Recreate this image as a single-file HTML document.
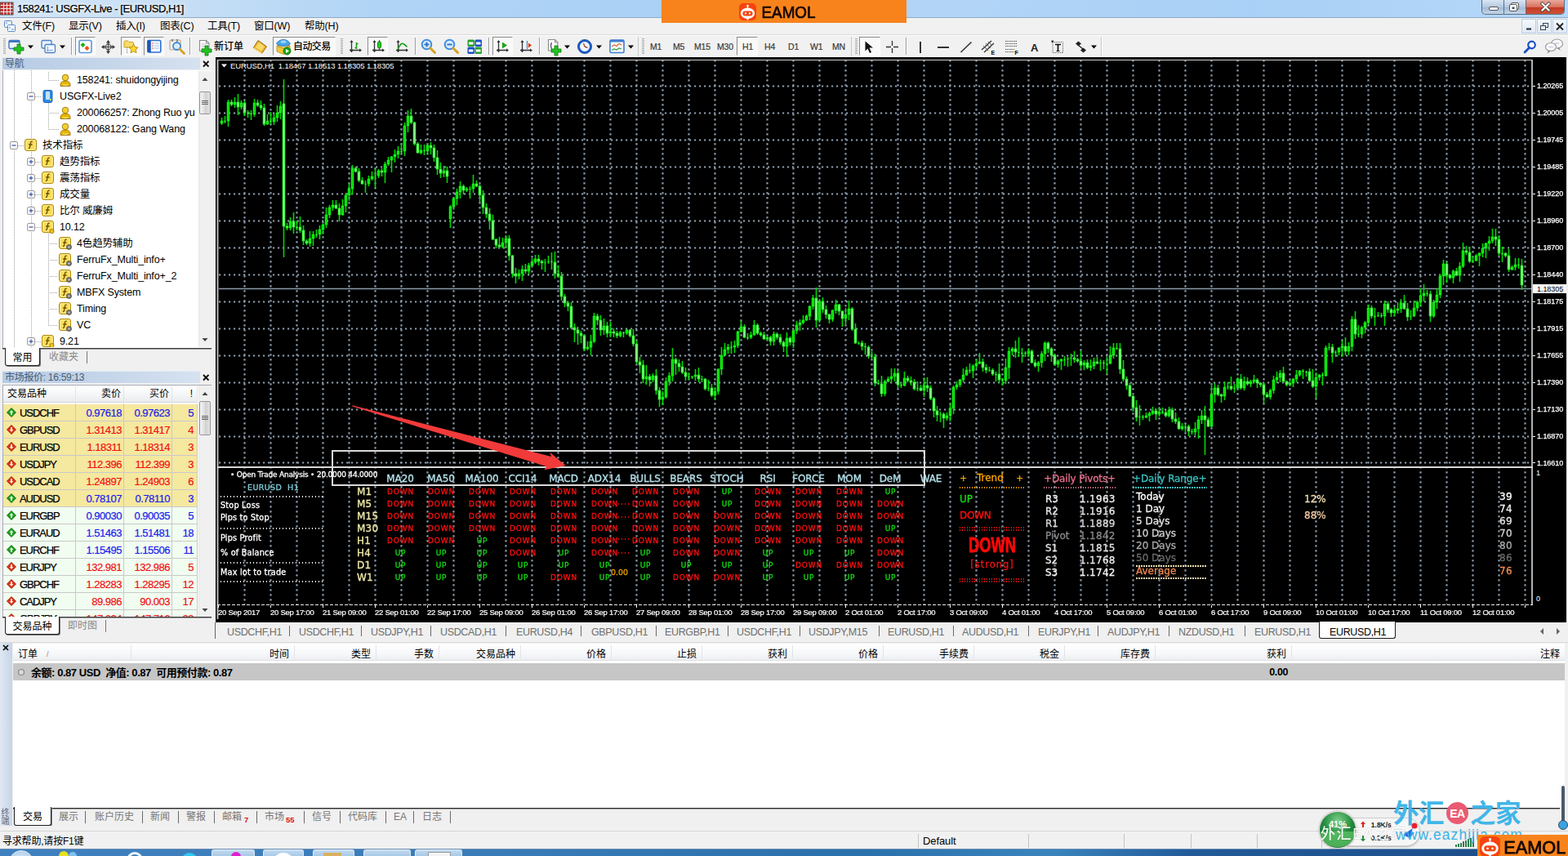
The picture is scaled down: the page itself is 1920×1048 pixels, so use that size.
<!DOCTYPE html>
<html lang="zh-CN"><head><meta charset="utf-8"><title>158241: USGFX-Live - [EURUSD,H1]</title>
<style>
*{box-sizing:border-box;margin:0;padding:0}
html,body{width:1920px;height:1048px;overflow:hidden;background:#f0f0f0}
body{position:relative;font-family:"Liberation Sans","Noto Sans CJK SC",sans-serif;font-size:12px;color:#000}
.a{position:absolute}
.t{position:absolute;white-space:nowrap;line-height:1}
.cj{font-family:"Liberation Sans","Noto Sans CJK SC",sans-serif}
.dv{font-family:"DejaVu Sans","Liberation Sans",sans-serif}
svg{position:absolute;overflow:visible}
</style></head>
<body>

<!-- parts.p10_frame -->
<div class="a" style="left:0px;top:0px;width:1920px;height:22px;background:linear-gradient(90deg,#d3e5f6 0%,#c6def5 12%,#b0d4f6 24%,#aad1f6 45%,#b2d5f7 60%,#a9d0f6 80%,#b6d8f8 100%);"></div>
<div class="a" style="left:0px;top:21px;width:1920px;height:1px;background:#8fa9c6;"></div>
<svg style="left:0;top:2px" width="17" height="17" viewBox="0 0 17 17"><rect x="0" y="1" width="16" height="15" fill="#c33"/><g stroke="#e8e8e8" stroke-width="1"><path d="M0 4.5H16M0 8.5H16M0 12.5H16M4.5 1V16M8.5 1V16M12.5 1V16"/></g><rect x="0" y="1" width="16" height="15" fill="none" stroke="#555" stroke-width="1"/></svg>
<div class="t " style="left:21px;top:4.0px;font-size:13px;color:#000;letter-spacing:-0.42px;-webkit-text-stroke:0.25px #000;text-shadow:0 0 6px #fff,0 0 3px #fff">158241: USGFX-Live - [EURUSD,H1]</div>
<div class="a" style="left:810px;top:0px;width:300px;height:28px;background:#f8831c;z-index:5"></div>
<svg style="left:905px;top:4px;z-index:6" width="100" height="22" viewBox="0 0 100 22"><rect x="0" y="0" width="21" height="21" rx="5" fill="#f5440f"/><path d="M10.500 6.200V3.200" stroke="#fff" stroke-width="1.300"/><circle cx="10.500" cy="2.900" r="1.250" fill="#fff"/><ellipse cx="10.500" cy="12.300" rx="8.600" ry="6.800" fill="#fff"/><path d="M8.500 18.500h4l-2 2.200z" fill="#fff"/><rect x="4.400" y="9.400" width="12.200" height="6" rx="3" fill="#f5440f"/><circle cx="8" cy="12.400" r="1.150" fill="#fff"/><circle cx="13" cy="12.400" r="1.150" fill="#fff"/><text x="27.500" y="18.300" font-family="Liberation Sans,sans-serif" font-size="19.500" fill="#160800" stroke="#160800" stroke-width="0.700" textLength="66" lengthAdjust="spacingAndGlyphs" style="filter:blur(0.3px)">EAMOL</text></svg>
<div class="a" style="left:1814px;top:0;width:102px;height:18px;border:1px solid #5b6f86;border-top:none;border-radius:0 0 5px 5px;background:linear-gradient(#d8e6f5,#b4c9e0 50%,#9fb8d4 51%,#c3d6ea);overflow:hidden"><div class="a" style="left:54px;top:0;width:48px;height:18px;background:linear-gradient(#eaa99b,#d9705c 48%,#c23a22 52%,#d2543a)"></div><div class="a" style="left:26px;top:0;width:1px;height:18px;background:#5b6f86"></div><div class="a" style="left:53px;top:0;width:1px;height:18px;background:#5b6f86"></div></div>
<svg style="left:1814px;top:0" width="102" height="18"><rect x="9.5" y="8.5" width="11" height="4" rx="1.5" fill="#fff" stroke="#555" stroke-width="1"/><rect x="36.500" y="3.500" width="9" height="8" rx="1.5" fill="#fff" stroke="#555"/><rect x="34.500" y="5.500" width="9" height="8" rx="1.5" fill="#fff" stroke="#555"/><rect x="37.500" y="8.500" width="3" height="2.500" fill="#456"/><path d="M74.500 4.500L82.500 12.500M82.500 4.500L74.500 12.500" stroke="#444" stroke-width="3.800" stroke-linecap="square"/><path d="M74.500 4.500L82.500 12.500M82.500 4.500L74.500 12.500" stroke="#fff" stroke-width="2.200" stroke-linecap="square"/></svg>
<div class="a" style="left:0px;top:22px;width:1920px;height:21px;background:#f1f1f1;"></div>
<div class="a" style="left:0px;top:42px;width:1920px;height:1px;background:#d9d9d9;"></div>
<div class="a" style="left:0px;top:43px;width:1920px;height:1px;background:#ffffff;"></div>
<svg style="left:4px;top:24px" width="16" height="16" viewBox="0 0 16 16"><rect x="1.5" y="1.5" width="9" height="8" rx="1" fill="#eaf2fb" stroke="#5b8bc7"/><rect x="5.5" y="6.5" width="9" height="8" rx="1" fill="#f6faff" stroke="#5b8bc7"/><path d="M7 10h2M10 12h3M3 4h2" stroke="#5b8bc7"/></svg>
<div class="t " style="left:27px;top:25.8px;font-size:12.5px;color:#000;letter-spacing:-0.2px">文件(F)</div>
<div class="t " style="left:84px;top:25.8px;font-size:12.5px;color:#000;letter-spacing:-0.2px">显示(V)</div>
<div class="t " style="left:142px;top:25.8px;font-size:12.5px;color:#000;letter-spacing:-0.2px">插入(I)</div>
<div class="t " style="left:196px;top:25.8px;font-size:12.5px;color:#000;letter-spacing:-0.2px">图表(C)</div>
<div class="t " style="left:254px;top:25.8px;font-size:12.5px;color:#000;letter-spacing:-0.2px">工具(T)</div>
<div class="t " style="left:311px;top:25.8px;font-size:12.5px;color:#000;letter-spacing:-0.2px">窗口(W)</div>
<div class="t " style="left:373px;top:25.8px;font-size:12.5px;color:#000;letter-spacing:-0.2px">帮助(H)</div>
<div class="a" style="left:1863px;top:23px;width:18px;height:18px;border:1px solid #b9cde4;background:linear-gradient(#f4f8fd,#dfe9f5)"></div>
<div class="a" style="left:1882px;top:23px;width:18px;height:18px;border:1px solid #b9cde4;background:linear-gradient(#f4f8fd,#dfe9f5)"></div>
<div class="a" style="left:1901px;top:23px;width:18px;height:18px;border:1px solid #b9cde4;background:linear-gradient(#f4f8fd,#dfe9f5)"></div>
<svg style="left:1863px;top:23px" width="56" height="18"><path d="M6 12.500h6" stroke="#223" stroke-width="2"/><rect x="26.500" y="5.500" width="6" height="5" fill="none" stroke="#345"/><rect x="23.500" y="8.500" width="6" height="5" fill="#e8eef6" stroke="#345"/><path d="M43 5.500L51 13.500M51 5.500L43 13.500" stroke="#222" stroke-width="1.800"/></svg>
<div class="a" style="left:0px;top:44px;width:1920px;height:26px;background:#f1f1f1;"></div>
<!-- parts.p15_toolbar -->
<div class="a" style="left:4px;top:47px;width:3px;height:20px;background:repeating-linear-gradient(180deg,#a8a8a8 0 1px,transparent 1px 2px)"></div>
<svg style="left:10px;top:48px" width="19" height="19" viewBox="0 0 19 19"><rect x="1" y="1.500" width="13" height="10" rx="1.500" fill="#eef5fd" stroke="#3d78c4" stroke-width="1.400"/><rect x="1" y="1.500" width="13" height="2.500" fill="#3d78c4"/><path d="M7 10h4v-4h4v4h4v4h-4v4h-4v-4h-4z" fill="#22c322" stroke="#0a7a0a" stroke-width="0.800"/></svg>
<svg style="left:34px;top:55px" width="7" height="5" viewBox="0 0 7 5"><path d="M0 0.500h7L3.500 4.500z" fill="#000"/></svg>
<svg style="left:50px;top:48px" width="19" height="19" viewBox="0 0 19 19"><rect x="1" y="1.500" width="12" height="9.500" rx="1.500" fill="#e8f1fb" stroke="#4b82c8" stroke-width="1.300"/><rect x="5" y="6.500" width="12.500" height="10" rx="1.500" fill="#f2f7fd" stroke="#4b82c8" stroke-width="1.300"/><path d="M7 13.500h8M8.500 9v6" stroke="#7fa6d8" stroke-width="1"/></svg>
<svg style="left:73px;top:55px" width="7" height="5" viewBox="0 0 7 5"><path d="M0 0.500h7L3.500 4.500z" fill="#000"/></svg>
<div class="a" style="left:87px;top:46px;width:1px;height:21px;background:#9d9d9d;"></div><div class="a" style="left:88px;top:46px;width:1px;height:21px;background:#fff;"></div>
<div class="a" style="left:92px;top:45px;width:25px;height:23px;background:#f9f9f9;border-top:1px solid #8c8c8c;border-left:1px solid #8c8c8c;border-right:1px solid #fdfdfd;border-bottom:1px solid #fdfdfd"></div>
<svg style="left:96px;top:48px" width="18" height="18" viewBox="0 0 18 18"><rect x="1" y="1.500" width="15" height="15" rx="2" fill="#fff" stroke="#5a96dc" stroke-width="1.600"/><path d="M5.500 4l3 3-3 3-3-3z" fill="#22b022"/><path d="M10.500 8l3 3-3 3-3-3z" fill="#f05020"/></svg>
<svg style="left:124px;top:49px" width="17" height="17" viewBox="0 0 17 17"><path d="M8.500 1v15M1 8.500h15" stroke="#444" stroke-width="1"/><path d="M8.500 0l-2.500 3.500h5zM8.500 17l-2.500-3.500h5zM0 8.500l3.500-2.500v5zM17 8.500l-3.500-2.500v5z" fill="#333"/><path d="M8.500 4l4.500 4.500-4.500 4.500-4.500-4.500z" fill="none" stroke="#555" stroke-width="1.200"/></svg>
<div class="a" style="left:148px;top:45px;width:25px;height:23px;background:#f9f9f9;border-top:1px solid #8c8c8c;border-left:1px solid #8c8c8c;border-right:1px solid #fdfdfd;border-bottom:1px solid #fdfdfd"></div>
<svg style="left:151px;top:47px" width="20" height="20" viewBox="0 0 20 20"><path d="M1 4.500q0-1.500 1.500-1.500h3l1.500 1.500h4q1.500 0 1.500 1.500v5h-11.500z" fill="#f7dd6a" stroke="#c49a1a" stroke-width="0.900"/><path d="M4.500 11v7" stroke="#777" stroke-dasharray="1 1"/><path d="M12.500 7l1.700 3.600 3.900.5-2.900 2.700.8 3.900-3.500-1.900-3.500 1.900.8-3.900-2.900-2.700 3.900-.5z" fill="#ffd92e" stroke="#b8860b" stroke-width="0.900"/></svg>
<div class="a" style="left:176px;top:45px;width:25px;height:23px;background:#f9f9f9;border-top:1px solid #8c8c8c;border-left:1px solid #8c8c8c;border-right:1px solid #fdfdfd;border-bottom:1px solid #fdfdfd"></div>
<svg style="left:180px;top:48px" width="18" height="18" viewBox="0 0 18 18"><rect x="0.800" y="1.500" width="16" height="14.500" rx="1.500" fill="#f8fbff" stroke="#2d6fd0" stroke-width="1.600"/><rect x="0.800" y="1.500" width="4" height="14.500" fill="#1f56b8"/><path d="M6 5h2M6 8h2M6 11h2" stroke="#e05050" stroke-width="1.200"/><path d="M9 5h6M9 8h6M9 11h6" stroke="#a8c0e8" stroke-width="1.200"/></svg>
<svg style="left:207px;top:47px" width="21" height="21" viewBox="0 0 21 21"><rect x="1" y="2" width="13" height="12" rx="1.500" fill="#f4f0ea" stroke="#b8a890" stroke-width="1.200"/><path d="M4 1v3M10 1v3" stroke="#556" stroke-width="1.200"/><circle cx="9.500" cy="9.500" r="4.500" fill="#d8ecff" stroke="#3d88d8" stroke-width="1.800"/><path d="M13 13l5.500 5.500" stroke="#d8a020" stroke-width="2.800" stroke-linecap="round"/></svg>
<div class="a" style="left:232px;top:46px;width:1px;height:21px;background:#9d9d9d;"></div><div class="a" style="left:233px;top:46px;width:1px;height:21px;background:#fff;"></div>
<svg style="left:243px;top:48px" width="18" height="20" viewBox="0 0 18 20"><path d="M1.500 1.500h8l3.500 3.500v9.500h-11.500z" fill="#fbfbfb" stroke="#8c8c8c" stroke-width="1.100"/><path d="M9.500 1.500v3.500h3.500" fill="none" stroke="#8c8c8c"/><path d="M3.500 6h6M3.500 8.500h6M3.500 11h4" stroke="#bbb"/><path d="M4 12h4v-4h4v4h4v4h-4v4h-4v-4h-4z" fill="#22c322" stroke="#0a7a0a" stroke-width="0.800"/></svg>
<div class="t " style="left:262px;top:50.5px;font-size:12px;color:#000;font-weight:500">新订单</div>
<svg style="left:309px;top:48px" width="19" height="19" viewBox="0 0 19 19"><path d="M7 1.500l10.500 7.500-6 8.500-10.500-6.500z" fill="#e8b030" stroke="#9a6a08" stroke-width="1"/><path d="M8 4l7 5-4 5.500-7.500-4.500z" fill="#f8d868"/><path d="M1 11l10.500 6.500" stroke="#fff2b0" stroke-width="1.200"/></svg>
<div class="a" style="left:334px;top:45px;width:77px;height:23px;background:#f9f9f9;border-top:1px solid #8c8c8c;border-left:1px solid #8c8c8c;border-right:1px solid #fdfdfd;border-bottom:1px solid #fdfdfd"></div>
<svg style="left:337px;top:47px" width="20" height="21" viewBox="0 0 20 21"><path d="M2 9l8 3 8-3v7l-8 3.500-8-3.500z" fill="#f2c838" stroke="#b08a10" stroke-width="0.800"/><path d="M2 9l8-2.500 8 2.500-8 3z" fill="#ffe68a" stroke="#b08a10" stroke-width="0.800"/><path d="M1.500 6.500q3-5 8.500-5t8.500 5q-2.500 3-8.500 3t-8.500-3z" fill="#4aa8e8" stroke="#1c6cb8" stroke-width="0.800"/><ellipse cx="10" cy="4" rx="3.500" ry="1.800" fill="#9ad2f8"/><circle cx="14.500" cy="15.500" r="4.500" fill="#18a818" stroke="#0a6a0a" stroke-width="0.800"/><path d="M13 13l4 2.500-4 2.500z" fill="#fff"/></svg>
<div class="t " style="left:359px;top:50.5px;font-size:12px;color:#000;font-weight:500;letter-spacing:-0.6px">自动交易</div>
<div class="a" style="left:417px;top:47px;width:3px;height:20px;background:repeating-linear-gradient(180deg,#a8a8a8 0 1px,transparent 1px 2px)"></div>
<svg style="left:427px;top:49px" width="17" height="17" viewBox="0 0 17 17"><path d="M3.500 1v14M1 12.500h14" stroke="#333" stroke-width="1.300" fill="none"/><path d="M3.500 0l-2 3h4zM16 12.500l-3-2v4z" fill="#333"/><circle cx="3.500" cy="12.500" r="1.600" fill="#333"/><path d="M9.500 3v8M9.500 9.500h-2M9.500 4.500h2" stroke="#18a018" stroke-width="1.600" fill="none"/></svg>
<div class="a" style="left:450px;top:45px;width:25px;height:23px;background:#f9f9f9;border-top:1px solid #8c8c8c;border-left:1px solid #8c8c8c;border-right:1px solid #fdfdfd;border-bottom:1px solid #fdfdfd"></div>
<svg style="left:455px;top:49px" width="17" height="17" viewBox="0 0 17 17"><path d="M3.500 1v14M1 12.500h14" stroke="#333" stroke-width="1.300" fill="none"/><path d="M3.500 0l-2 3h4zM16 12.500l-3-2v4z" fill="#333"/><circle cx="3.500" cy="12.500" r="1.600" fill="#333"/><path d="M9.500 0v12" stroke="#0a700a" stroke-width="1"/><rect x="7.500" y="2" width="4" height="8" rx="1.500" fill="#22d022" stroke="#0a700a" stroke-width="0.900"/></svg>
<svg style="left:484px;top:49px" width="17" height="17" viewBox="0 0 17 17"><path d="M3.500 1v14M1 12.500h14" stroke="#333" stroke-width="1.300" fill="none"/><path d="M3.500 0l-2 3h4zM16 12.500l-3-2v4z" fill="#333"/><circle cx="3.500" cy="12.500" r="1.600" fill="#333"/><path d="M3.500 11q3-8 6-6.500t5 4" stroke="#18a018" stroke-width="1.600" fill="none"/></svg>
<div class="a" style="left:508px;top:46px;width:1px;height:21px;background:#9d9d9d;"></div><div class="a" style="left:509px;top:46px;width:1px;height:21px;background:#fff;"></div>
<svg style="left:515px;top:47px" width="20" height="20" viewBox="0 0 20 20"><circle cx="7.500" cy="7.500" r="5.800" fill="#d6ebff" stroke="#3f8ee0" stroke-width="2"/><path d="M4.500 7.500h6" stroke="#2a6cc0" stroke-width="1.800"/><path d="M7.500 4.500v6" stroke="#2a6cc0" stroke-width="1.800"/><path d="M12 12l5.500 5.500" stroke="#d8a21c" stroke-width="3" stroke-linecap="round"/></svg>
<svg style="left:543px;top:47px" width="20" height="20" viewBox="0 0 20 20"><circle cx="7.500" cy="7.500" r="5.800" fill="#d6ebff" stroke="#3f8ee0" stroke-width="2"/><path d="M4.500 7.500h6" stroke="#2a6cc0" stroke-width="1.800"/><path d="M12 12l5.500 5.500" stroke="#d8a21c" stroke-width="3" stroke-linecap="round"/></svg>
<svg style="left:572px;top:48px" width="19" height="19" viewBox="0 0 19 19"><rect x="0.500" y="0.500" width="8.500" height="8.500" rx="1.500" fill="#2aa02a"/><rect x="9.500" y="0.500" width="8.500" height="8.500" rx="1.500" fill="#1c50c8"/><rect x="0.500" y="9.500" width="8.500" height="8.500" rx="1.500" fill="#1c50c8"/><rect x="9.500" y="9.500" width="8.500" height="8.500" rx="1.500" fill="#2aa02a"/><rect x="2" y="3.500" width="5.500" height="3" fill="#fff"/><rect x="11" y="3.500" width="5.500" height="3" fill="#fff"/><rect x="2" y="12.500" width="5.500" height="3" fill="#fff"/><rect x="11" y="12.500" width="5.500" height="3" fill="#fff"/></svg>
<div class="a" style="left:598px;top:46px;width:1px;height:21px;background:#9d9d9d;"></div><div class="a" style="left:599px;top:46px;width:1px;height:21px;background:#fff;"></div>
<div class="a" style="left:603px;top:45px;width:25px;height:23px;background:#f9f9f9;border-top:1px solid #8c8c8c;border-left:1px solid #8c8c8c;border-right:1px solid #fdfdfd;border-bottom:1px solid #fdfdfd"></div>
<svg style="left:607px;top:49px" width="17" height="17" viewBox="0 0 17 17"><path d="M3.500 1v14M1 12.500h14" stroke="#333" stroke-width="1.300" fill="none"/><path d="M3.500 0l-2 3h4zM16 12.500l-3-2v4z" fill="#333"/><circle cx="3.500" cy="12.500" r="1.600" fill="#333"/><path d="M8 2.500l6 4-6 4z" fill="#18a818"/></svg>
<svg style="left:636px;top:49px" width="17" height="17" viewBox="0 0 17 17"><path d="M3.500 1v14M1 12.500h14" stroke="#333" stroke-width="1.300" fill="none"/><path d="M3.500 0l-2 3h4zM16 12.500l-3-2v4z" fill="#333"/><circle cx="3.500" cy="12.500" r="1.600" fill="#333"/><path d="M9.500 1v10" stroke="#3d88d8" stroke-width="1.300"/><path d="M15 6.500l-4-3v6z" fill="#e03010"/></svg>
<div class="a" style="left:660px;top:46px;width:1px;height:21px;background:#9d9d9d;"></div><div class="a" style="left:661px;top:46px;width:1px;height:21px;background:#fff;"></div>
<svg style="left:669px;top:47px" width="20" height="21" viewBox="0 0 20 21"><path d="M2.500 1.500h8l3.500 3.500v10h-11.500z" fill="#fbfbfb" stroke="#8c8c8c" stroke-width="1.100"/><path d="M10.500 1.500v3.500h3.500" fill="none" stroke="#8c8c8c"/><path d="M6.500 5q-2 4 0 8" stroke="#555" stroke-width="1.200" fill="none"/><path d="M6 13h4v-4h4v4h4v4h-4v4h-4v-4h-4z" fill="#22c322" stroke="#0a7a0a" stroke-width="0.800"/></svg>
<svg style="left:691px;top:55px" width="7" height="5" viewBox="0 0 7 5"><path d="M0 0.500h7L3.500 4.500z" fill="#000"/></svg>
<svg style="left:707px;top:48px" width="19" height="19" viewBox="0 0 19 19"><circle cx="9" cy="9" r="7.300" fill="#f4f9ff" stroke="#1c5cc8" stroke-width="2.600"/><circle cx="9" cy="9" r="8.600" fill="none" stroke="#0c3a90" stroke-width="0.700"/><path d="M9 9l-1.500-4M9 9l3.500 1.500" stroke="#a05028" stroke-width="1.400"/></svg>
<svg style="left:730px;top:55px" width="7" height="5" viewBox="0 0 7 5"><path d="M0 0.500h7L3.500 4.500z" fill="#000"/></svg>
<svg style="left:746px;top:48px" width="19" height="18" viewBox="0 0 19 18"><rect x="1" y="1" width="17" height="15.500" rx="1.500" fill="#f4f9ff" stroke="#3d7ed0" stroke-width="1.600"/><rect x="1" y="1" width="17" height="2.500" fill="#3d7ed0"/><path d="M3 9l3-2 3 1.500 3-3 3 1.500" stroke="#e06a30" stroke-width="1.300" fill="none"/><path d="M3 13.500l3-1.500 3 1 3-2 3 1" stroke="#30a040" stroke-width="1.300" fill="none"/></svg>
<svg style="left:769px;top:55px" width="7" height="5" viewBox="0 0 7 5"><path d="M0 0.500h7L3.500 4.500z" fill="#000"/></svg>
<div class="a" style="left:781px;top:45px;width:1px;height:24px;background:#c8c8c8;"></div>
<div class="a" style="left:786px;top:47px;width:3px;height:20px;background:repeating-linear-gradient(180deg,#a8a8a8 0 1px,transparent 1px 2px)"></div>
<div class="a" style="left:902px;top:45px;width:26px;height:23px;background:#f9f9f9;border-top:1px solid #8c8c8c;border-left:1px solid #8c8c8c;border-right:1px solid #fdfdfd;border-bottom:1px solid #fdfdfd"></div>
<div class="t " style="left:796px;top:52.2px;font-size:10.5px;color:#3a3a3a;letter-spacing:-0.2px;font-weight:500;-webkit-text-stroke:0.200px #3a3a3a">M1</div>
<div class="t " style="left:824px;top:52.2px;font-size:10.5px;color:#3a3a3a;letter-spacing:-0.2px;font-weight:500;-webkit-text-stroke:0.200px #3a3a3a">M5</div>
<div class="t " style="left:850px;top:52.2px;font-size:10.5px;color:#3a3a3a;letter-spacing:-0.2px;font-weight:500;-webkit-text-stroke:0.200px #3a3a3a">M15</div>
<div class="t " style="left:878px;top:52.2px;font-size:10.5px;color:#3a3a3a;letter-spacing:-0.2px;font-weight:500;-webkit-text-stroke:0.200px #3a3a3a">M30</div>
<div class="t " style="left:909px;top:52.2px;font-size:10.5px;color:#3a3a3a;letter-spacing:-0.2px;font-weight:500;-webkit-text-stroke:0.200px #3a3a3a">H1</div>
<div class="t " style="left:936px;top:52.2px;font-size:10.5px;color:#3a3a3a;letter-spacing:-0.2px;font-weight:500;-webkit-text-stroke:0.200px #3a3a3a">H4</div>
<div class="t " style="left:965px;top:52.2px;font-size:10.5px;color:#3a3a3a;letter-spacing:-0.2px;font-weight:500;-webkit-text-stroke:0.200px #3a3a3a">D1</div>
<div class="t " style="left:992px;top:52.2px;font-size:10.5px;color:#3a3a3a;letter-spacing:-0.2px;font-weight:500;-webkit-text-stroke:0.200px #3a3a3a">W1</div>
<div class="t " style="left:1019px;top:52.2px;font-size:10.5px;color:#3a3a3a;letter-spacing:-0.2px;font-weight:500;-webkit-text-stroke:0.200px #3a3a3a">MN</div>
<div class="a" style="left:1042px;top:45px;width:1px;height:24px;background:#c8c8c8;"></div>
<div class="a" style="left:1047px;top:47px;width:3px;height:20px;background:repeating-linear-gradient(180deg,#a8a8a8 0 1px,transparent 1px 2px)"></div>
<div class="a" style="left:1052px;top:45px;width:26px;height:23px;background:#f9f9f9;border-top:1px solid #8c8c8c;border-left:1px solid #8c8c8c;border-right:1px solid #fdfdfd;border-bottom:1px solid #fdfdfd"></div>
<svg style="left:1058px;top:50px" width="12" height="16" viewBox="0 0 12 16"><path d="M1.500 0.500v12l3-3 2.500 5.500 2-1-2.500-5.500h4.500z" fill="#111"/></svg>
<svg style="left:1084px;top:49px" width="17" height="17" viewBox="0 0 17 17"><path d="M8.500 1v6M8.500 10v6M1 8.500h6M10 8.500h6" stroke="#333" stroke-width="1.300"/></svg>
<div class="a" style="left:1109px;top:46px;width:1px;height:21px;background:#9d9d9d;"></div><div class="a" style="left:1110px;top:46px;width:1px;height:21px;background:#fff;"></div>
<div class="a" style="left:1126px;top:51px;width:2px;height:14px;background:#333;"></div>
<div class="a" style="left:1148px;top:57px;width:14px;height:2px;background:#333;"></div>
<svg style="left:1175px;top:50px" width="16" height="15" viewBox="0 0 16 15"><path d="M1.500 14L14.500 1.500" stroke="#333" stroke-width="1.600"/></svg>
<svg style="left:1201px;top:48px" width="19" height="19" viewBox="0 0 19 19"><path d="M1 13L13 2M4 16L16 5" stroke="#333" stroke-width="1.300"/><path d="M3 8l6 6M6 5l6 6M9 3l5 5" stroke="#555" stroke-width="1"/><text x="12.500" y="19" font-size="7" font-weight="bold" font-family="Liberation Sans,sans-serif" fill="#000">E</text></svg>
<svg style="left:1231px;top:49px" width="17" height="18" viewBox="0 0 17 18"><path d="M0 1.500h15M0 4.500h15M0 7.500h15M0 11.500h11M0 14.500h11" stroke="#555" stroke-width="1.200" stroke-dasharray="1.500 1"/><text x="11.500" y="18" font-size="7" font-weight="bold" font-family="Liberation Sans,sans-serif" fill="#000">F</text></svg>
<div class="t " style="left:1262px;top:51.5px;font-size:13px;color:#222;font-weight:bold">A</div>
<svg style="left:1287px;top:49px" width="16" height="17" viewBox="0 0 16 17"><rect x="2" y="2.500" width="12.500" height="13" fill="none" stroke="#555" stroke-width="1" stroke-dasharray="1 1"/><rect x="0.500" y="0.500" width="2.500" height="2.500" fill="#333"/><path d="M5 5.500h7M8.500 5.500v8" stroke="#111" stroke-width="1.700"/><path d="M6.500 13.500h4" stroke="#111" stroke-width="1"/></svg>
<svg style="left:1315px;top:50px" width="17" height="15" viewBox="0 0 17 15"><path d="M2 3.500l3.500-3 3.500 3-3.500 3z" fill="#222"/><path d="M8 11.500l3.500-3 3.500 3-3.500 3z" fill="#222"/><path d="M5 5l6 5" stroke="#222" stroke-width="1.300"/></svg>
<svg style="left:1336px;top:55px" width="7" height="5" viewBox="0 0 7 5"><path d="M0 0.500h7L3.500 4.500z" fill="#000"/></svg>
<div class="a" style="left:1348px;top:45px;width:1px;height:24px;background:#c8c8c8;"></div>
<div class="a" style="left:1349px;top:45px;width:1px;height:24px;background:#fff;"></div>
<svg style="left:1865px;top:49px" width="17" height="17" viewBox="0 0 17 17"><circle cx="10.500" cy="6" r="4.300" fill="#fff" stroke="#1c50c0" stroke-width="2.200"/><path d="M7.500 9.500l-5.500 5.500" stroke="#1c50c0" stroke-width="2.800" stroke-linecap="round"/></svg>
<svg style="left:1891px;top:47px" width="24" height="20" viewBox="0 0 24 20"><ellipse cx="15.500" cy="6.500" rx="7" ry="5.500" fill="#fafafa" stroke="#9a9a9a" stroke-width="1.200"/><path d="M18 11.500l2 3.500-4-3z" fill="#777"/><ellipse cx="8" cy="10.500" rx="6.500" ry="5" fill="#fdfdfd" stroke="#9a9a9a" stroke-width="1.200"/><path d="M5 15l-1.500 3.500 4-3z" fill="#777"/><path d="M5 10.500h6M13 6h5" stroke="#c8cce8" stroke-width="1.500"/></svg>
<!-- parts.p20_nav -->
<div class="a" style="left:0px;top:70px;width:264px;height:716px;background:#f0f0f0;"></div>
<div class="a" style="left:3px;top:70px;width:242px;height:15px;background:linear-gradient(90deg,#b6cbe5,#c6d6ea 55%,#d6e2f0);border-top:1px solid #e4ecf5"></div>
<div class="t " style="left:6px;top:71.5px;font-size:12px;color:#4a5a70;letter-spacing:-0.3px">导航</div>
<svg style="left:248px;top:74px" width="9" height="9"><path d="M1 1l6.500 6.500M7.500 1L1 7.500" stroke="#000" stroke-width="1.800"/></svg>
<div class="a" style="left:3px;top:86px;width:256px;height:340px;background:#fff;border-left:1px solid #a5acb5"></div>
<div class="a" style="left:17px;top:86px;width:1px;height:339px;background:repeating-linear-gradient(180deg,#a0a0a0 0 1px,transparent 1px 2px)"></div>
<div class="a" style="left:38px;top:86px;width:1px;height:339px;background:repeating-linear-gradient(180deg,#a0a0a0 0 1px,transparent 1px 2px)"></div>
<div class="a" style="left:59px;top:88px;width:1px;height:10px;background:repeating-linear-gradient(180deg,#a0a0a0 0 1px,transparent 1px 2px)"></div>
<div class="a" style="left:59px;top:98px;width:13px;height:1px;background:repeating-linear-gradient(90deg,#a0a0a0 0 1px,transparent 1px 2px)"></div>
<div class="a" style="left:59px;top:126px;width:1px;height:32px;background:repeating-linear-gradient(180deg,#a0a0a0 0 1px,transparent 1px 2px)"></div>
<div class="a" style="left:59px;top:138px;width:13px;height:1px;background:repeating-linear-gradient(90deg,#a0a0a0 0 1px,transparent 1px 2px)"></div>
<div class="a" style="left:59px;top:158px;width:13px;height:1px;background:repeating-linear-gradient(90deg,#a0a0a0 0 1px,transparent 1px 2px)"></div>
<div class="a" style="left:59px;top:286px;width:1px;height:112px;background:repeating-linear-gradient(180deg,#a0a0a0 0 1px,transparent 1px 2px)"></div>
<div class="a" style="left:59px;top:298px;width:12px;height:1px;background:repeating-linear-gradient(90deg,#a0a0a0 0 1px,transparent 1px 2px)"></div>
<div class="a" style="left:59px;top:318px;width:12px;height:1px;background:repeating-linear-gradient(90deg,#a0a0a0 0 1px,transparent 1px 2px)"></div>
<div class="a" style="left:59px;top:338px;width:12px;height:1px;background:repeating-linear-gradient(90deg,#a0a0a0 0 1px,transparent 1px 2px)"></div>
<div class="a" style="left:59px;top:358px;width:12px;height:1px;background:repeating-linear-gradient(90deg,#a0a0a0 0 1px,transparent 1px 2px)"></div>
<div class="a" style="left:59px;top:378px;width:12px;height:1px;background:repeating-linear-gradient(90deg,#a0a0a0 0 1px,transparent 1px 2px)"></div>
<div class="a" style="left:59px;top:398px;width:12px;height:1px;background:repeating-linear-gradient(90deg,#a0a0a0 0 1px,transparent 1px 2px)"></div>
<div class="a" style="left:4px;top:86px;width:239px;height:339px;overflow:hidden">
<svg style="left:69px;top:4px" width="14" height="16" viewBox="0 0 14 16"><path d="M1 15.500C0.500 11 3 9 7 9S13.500 11 13 15.500Z" fill="#e8b400" stroke="#8a6a00" stroke-width="0.800"/><circle cx="7" cy="5" r="3.800" fill="#f5cf2e" stroke="#8a6a00" stroke-width="0.800"/><path d="M4 13.500q3 2 6 0" stroke="#fff3a8" stroke-width="1" fill="none"/></svg>
<div class="t " style="left:90px;top:5.8px;font-size:12.5px;color:#000;letter-spacing:-0.15px">158241: shuidongyijing</div>
<div class="a" style="left:39px;top:32px;width:7px;height:1px;background:repeating-linear-gradient(90deg,#a0a0a0 0 1px,transparent 1px 2px)"></div>
<svg style="left:29px;top:27px" width="10" height="10" viewBox="0 0 10 10"><rect x="0.500" y="0.500" width="9" height="9" rx="1.500" fill="#fbfbfb" stroke="#9b9b9b"/><path d="M2.500 5h5" stroke="#3a4ea8" stroke-width="1.200"/></svg>
<svg style="left:48px;top:24px" width="13" height="16" viewBox="0 0 13 16"><rect x="1" y="0.500" width="11" height="15" rx="2" fill="#2b8be6" stroke="#0b4f9c" stroke-width="0.800"/><rect x="4" y="2" width="5" height="10" rx="1" fill="#bfe2ff"/><rect x="9" y="11" width="2" height="2" fill="#e8e04a"/></svg>
<div class="t " style="left:69px;top:25.8px;font-size:12.5px;color:#000;letter-spacing:-0.15px">USGFX-Live2</div>
<svg style="left:69px;top:44px" width="14" height="16" viewBox="0 0 14 16"><path d="M1 15.500C0.500 11 3 9 7 9S13.500 11 13 15.500Z" fill="#e8b400" stroke="#8a6a00" stroke-width="0.800"/><circle cx="7" cy="5" r="3.800" fill="#f5cf2e" stroke="#8a6a00" stroke-width="0.800"/><path d="M4 13.500q3 2 6 0" stroke="#fff3a8" stroke-width="1" fill="none"/></svg>
<div class="t " style="left:90px;top:45.8px;font-size:12.5px;color:#000;letter-spacing:-0.15px">200066257: Zhong Ruo yu</div>
<svg style="left:69px;top:64px" width="14" height="16" viewBox="0 0 14 16"><path d="M1 15.500C0.500 11 3 9 7 9S13.500 11 13 15.500Z" fill="#e8b400" stroke="#8a6a00" stroke-width="0.800"/><circle cx="7" cy="5" r="3.800" fill="#f5cf2e" stroke="#8a6a00" stroke-width="0.800"/><path d="M4 13.500q3 2 6 0" stroke="#fff3a8" stroke-width="1" fill="none"/></svg>
<div class="t " style="left:90px;top:65.8px;font-size:12.5px;color:#000;letter-spacing:-0.15px">200068122: Gang Wang</div>
<div class="a" style="left:18px;top:92px;width:7px;height:1px;background:repeating-linear-gradient(90deg,#a0a0a0 0 1px,transparent 1px 2px)"></div>
<svg style="left:8px;top:87px" width="10" height="10" viewBox="0 0 10 10"><rect x="0.500" y="0.500" width="9" height="9" rx="1.500" fill="#fbfbfb" stroke="#9b9b9b"/><path d="M2.500 5h5" stroke="#3a4ea8" stroke-width="1.200"/></svg>
<svg style="left:26px;top:84px" width="17" height="17" viewBox="0 0 17 17"><rect x="0.500" y="0.500" width="14" height="14" rx="2.500" fill="#f7dc55" stroke="#b08a10"/><rect x="2" y="2" width="11" height="11" rx="1.500" fill="none" stroke="#fdf1a6" stroke-width="1"/><path d="M9.800 3.200q-2-.6-2.300 1.800l-.9 5.200q-.3 1.600-1.700 1.200M5.200 7h4.300" stroke="#6b4d00" stroke-width="1.300" fill="none"/></svg>
<div class="t " style="left:48px;top:85.8px;font-size:12.5px;color:#000;letter-spacing:-0.15px">技术指标</div>
<div class="a" style="left:39px;top:112px;width:7px;height:1px;background:repeating-linear-gradient(90deg,#a0a0a0 0 1px,transparent 1px 2px)"></div>
<svg style="left:29px;top:107px" width="10" height="10" viewBox="0 0 10 10"><rect x="0.500" y="0.500" width="9" height="9" rx="1.500" fill="#fbfbfb" stroke="#9b9b9b"/><path d="M2.500 5h5" stroke="#3a4ea8" stroke-width="1.200"/><path d="M5 2.500v5" stroke="#3a4ea8" stroke-width="1.200"/></svg>
<svg style="left:47px;top:104px" width="17" height="17" viewBox="0 0 17 17"><rect x="0.500" y="0.500" width="14" height="14" rx="2.500" fill="#f7dc55" stroke="#b08a10"/><rect x="2" y="2" width="11" height="11" rx="1.500" fill="none" stroke="#fdf1a6" stroke-width="1"/><path d="M9.800 3.200q-2-.6-2.300 1.800l-.9 5.200q-.3 1.600-1.700 1.200M5.200 7h4.300" stroke="#6b4d00" stroke-width="1.300" fill="none"/></svg>
<div class="t " style="left:69px;top:105.8px;font-size:12.5px;color:#000;letter-spacing:-0.15px">趋势指标</div>
<div class="a" style="left:39px;top:132px;width:7px;height:1px;background:repeating-linear-gradient(90deg,#a0a0a0 0 1px,transparent 1px 2px)"></div>
<svg style="left:29px;top:127px" width="10" height="10" viewBox="0 0 10 10"><rect x="0.500" y="0.500" width="9" height="9" rx="1.500" fill="#fbfbfb" stroke="#9b9b9b"/><path d="M2.500 5h5" stroke="#3a4ea8" stroke-width="1.200"/><path d="M5 2.500v5" stroke="#3a4ea8" stroke-width="1.200"/></svg>
<svg style="left:47px;top:124px" width="17" height="17" viewBox="0 0 17 17"><rect x="0.500" y="0.500" width="14" height="14" rx="2.500" fill="#f7dc55" stroke="#b08a10"/><rect x="2" y="2" width="11" height="11" rx="1.500" fill="none" stroke="#fdf1a6" stroke-width="1"/><path d="M9.800 3.200q-2-.6-2.300 1.800l-.9 5.200q-.3 1.600-1.700 1.200M5.200 7h4.300" stroke="#6b4d00" stroke-width="1.300" fill="none"/></svg>
<div class="t " style="left:69px;top:125.8px;font-size:12.5px;color:#000;letter-spacing:-0.15px">震荡指标</div>
<div class="a" style="left:39px;top:152px;width:7px;height:1px;background:repeating-linear-gradient(90deg,#a0a0a0 0 1px,transparent 1px 2px)"></div>
<svg style="left:29px;top:147px" width="10" height="10" viewBox="0 0 10 10"><rect x="0.500" y="0.500" width="9" height="9" rx="1.500" fill="#fbfbfb" stroke="#9b9b9b"/><path d="M2.500 5h5" stroke="#3a4ea8" stroke-width="1.200"/><path d="M5 2.500v5" stroke="#3a4ea8" stroke-width="1.200"/></svg>
<svg style="left:47px;top:144px" width="17" height="17" viewBox="0 0 17 17"><rect x="0.500" y="0.500" width="14" height="14" rx="2.500" fill="#f7dc55" stroke="#b08a10"/><rect x="2" y="2" width="11" height="11" rx="1.500" fill="none" stroke="#fdf1a6" stroke-width="1"/><path d="M9.800 3.200q-2-.6-2.300 1.800l-.9 5.200q-.3 1.600-1.700 1.200M5.200 7h4.300" stroke="#6b4d00" stroke-width="1.300" fill="none"/></svg>
<div class="t " style="left:69px;top:145.8px;font-size:12.5px;color:#000;letter-spacing:-0.15px">成交量</div>
<div class="a" style="left:39px;top:172px;width:7px;height:1px;background:repeating-linear-gradient(90deg,#a0a0a0 0 1px,transparent 1px 2px)"></div>
<svg style="left:29px;top:167px" width="10" height="10" viewBox="0 0 10 10"><rect x="0.500" y="0.500" width="9" height="9" rx="1.500" fill="#fbfbfb" stroke="#9b9b9b"/><path d="M2.500 5h5" stroke="#3a4ea8" stroke-width="1.200"/><path d="M5 2.500v5" stroke="#3a4ea8" stroke-width="1.200"/></svg>
<svg style="left:47px;top:164px" width="17" height="17" viewBox="0 0 17 17"><rect x="0.500" y="0.500" width="14" height="14" rx="2.500" fill="#f7dc55" stroke="#b08a10"/><rect x="2" y="2" width="11" height="11" rx="1.500" fill="none" stroke="#fdf1a6" stroke-width="1"/><path d="M9.800 3.200q-2-.6-2.300 1.800l-.9 5.200q-.3 1.600-1.700 1.200M5.200 7h4.300" stroke="#6b4d00" stroke-width="1.300" fill="none"/></svg>
<div class="t " style="left:69px;top:165.8px;font-size:12.5px;color:#000;letter-spacing:-0.15px">比尔 威廉姆</div>
<div class="a" style="left:39px;top:192px;width:7px;height:1px;background:repeating-linear-gradient(90deg,#a0a0a0 0 1px,transparent 1px 2px)"></div>
<svg style="left:29px;top:187px" width="10" height="10" viewBox="0 0 10 10"><rect x="0.500" y="0.500" width="9" height="9" rx="1.500" fill="#fbfbfb" stroke="#9b9b9b"/><path d="M2.500 5h5" stroke="#3a4ea8" stroke-width="1.200"/></svg>
<svg style="left:47px;top:184px" width="17" height="17" viewBox="0 0 17 17"><rect x="0.500" y="0.500" width="14" height="14" rx="2.500" fill="#f7dc55" stroke="#b08a10"/><rect x="2" y="2" width="11" height="11" rx="1.500" fill="none" stroke="#fdf1a6" stroke-width="1"/><path d="M9.800 3.200q-2-.6-2.300 1.800l-.9 5.200q-.3 1.600-1.700 1.200M5.200 7h4.300" stroke="#6b4d00" stroke-width="1.300" fill="none"/><circle cx="12.500" cy="13" r="2.600" fill="#f2c40f" stroke="#8a6a00" stroke-width="0.800"/></svg>
<div class="t " style="left:69px;top:185.8px;font-size:12.5px;color:#000;letter-spacing:-0.15px">10.12</div>
<svg style="left:68px;top:204px" width="17" height="17" viewBox="0 0 17 17"><rect x="0.500" y="0.500" width="14" height="14" rx="2.500" fill="#f7dc55" stroke="#b08a10"/><rect x="2" y="2" width="11" height="11" rx="1.500" fill="none" stroke="#fdf1a6" stroke-width="1"/><path d="M9.800 3.200q-2-.6-2.300 1.800l-.9 5.200q-.3 1.600-1.700 1.200M5.200 7h4.300" stroke="#6b4d00" stroke-width="1.300" fill="none"/><circle cx="12.500" cy="12.500" r="3" fill="#7a7a7a" stroke="#444" stroke-width="0.800"/><circle cx="12.500" cy="12.500" r="1" fill="#ddd"/></svg>
<div class="t " style="left:90px;top:205.8px;font-size:12.5px;color:#000;letter-spacing:-0.15px">4色趋势辅助</div>
<svg style="left:68px;top:224px" width="17" height="17" viewBox="0 0 17 17"><rect x="0.500" y="0.500" width="14" height="14" rx="2.500" fill="#f7dc55" stroke="#b08a10"/><rect x="2" y="2" width="11" height="11" rx="1.500" fill="none" stroke="#fdf1a6" stroke-width="1"/><path d="M9.800 3.200q-2-.6-2.300 1.800l-.9 5.200q-.3 1.600-1.700 1.200M5.200 7h4.300" stroke="#6b4d00" stroke-width="1.300" fill="none"/><circle cx="12.500" cy="12.500" r="3" fill="#7a7a7a" stroke="#444" stroke-width="0.800"/><circle cx="12.500" cy="12.500" r="1" fill="#ddd"/></svg>
<div class="t " style="left:90px;top:225.8px;font-size:12.5px;color:#000;letter-spacing:-0.15px">FerruFx_Multi_info+</div>
<svg style="left:68px;top:244px" width="17" height="17" viewBox="0 0 17 17"><rect x="0.500" y="0.500" width="14" height="14" rx="2.500" fill="#f7dc55" stroke="#b08a10"/><rect x="2" y="2" width="11" height="11" rx="1.500" fill="none" stroke="#fdf1a6" stroke-width="1"/><path d="M9.800 3.200q-2-.6-2.300 1.800l-.9 5.200q-.3 1.600-1.700 1.200M5.200 7h4.300" stroke="#6b4d00" stroke-width="1.300" fill="none"/><circle cx="12.500" cy="12.500" r="3" fill="#7a7a7a" stroke="#444" stroke-width="0.800"/><circle cx="12.500" cy="12.500" r="1" fill="#ddd"/></svg>
<div class="t " style="left:90px;top:245.8px;font-size:12.5px;color:#000;letter-spacing:-0.15px">FerruFx_Multi_info+_2</div>
<svg style="left:68px;top:264px" width="17" height="17" viewBox="0 0 17 17"><rect x="0.500" y="0.500" width="14" height="14" rx="2.500" fill="#f7dc55" stroke="#b08a10"/><rect x="2" y="2" width="11" height="11" rx="1.500" fill="none" stroke="#fdf1a6" stroke-width="1"/><path d="M9.800 3.200q-2-.6-2.300 1.800l-.9 5.200q-.3 1.600-1.700 1.200M5.200 7h4.300" stroke="#6b4d00" stroke-width="1.300" fill="none"/><circle cx="12.500" cy="12.500" r="3" fill="#7a7a7a" stroke="#444" stroke-width="0.800"/><circle cx="12.500" cy="12.500" r="1" fill="#ddd"/></svg>
<div class="t " style="left:90px;top:265.8px;font-size:12.5px;color:#000;letter-spacing:-0.15px">MBFX System</div>
<svg style="left:68px;top:284px" width="17" height="17" viewBox="0 0 17 17"><rect x="0.500" y="0.500" width="14" height="14" rx="2.500" fill="#f7dc55" stroke="#b08a10"/><rect x="2" y="2" width="11" height="11" rx="1.500" fill="none" stroke="#fdf1a6" stroke-width="1"/><path d="M9.800 3.200q-2-.6-2.300 1.800l-.9 5.200q-.3 1.600-1.700 1.200M5.200 7h4.300" stroke="#6b4d00" stroke-width="1.300" fill="none"/><circle cx="12.500" cy="12.500" r="3" fill="#7a7a7a" stroke="#444" stroke-width="0.800"/><circle cx="12.500" cy="12.500" r="1" fill="#ddd"/></svg>
<div class="t " style="left:90px;top:285.8px;font-size:12.5px;color:#000;letter-spacing:-0.15px">Timing</div>
<svg style="left:68px;top:304px" width="17" height="17" viewBox="0 0 17 17"><rect x="0.500" y="0.500" width="14" height="14" rx="2.500" fill="#f7dc55" stroke="#b08a10"/><rect x="2" y="2" width="11" height="11" rx="1.500" fill="none" stroke="#fdf1a6" stroke-width="1"/><path d="M9.800 3.200q-2-.6-2.300 1.800l-.9 5.200q-.3 1.600-1.700 1.200M5.200 7h4.300" stroke="#6b4d00" stroke-width="1.300" fill="none"/><circle cx="12.500" cy="12.500" r="3" fill="#7a7a7a" stroke="#444" stroke-width="0.800"/><circle cx="12.500" cy="12.500" r="1" fill="#ddd"/></svg>
<div class="t " style="left:90px;top:305.8px;font-size:12.5px;color:#000;letter-spacing:-0.15px">VC</div>
<div class="a" style="left:39px;top:332px;width:7px;height:1px;background:repeating-linear-gradient(90deg,#a0a0a0 0 1px,transparent 1px 2px)"></div>
<svg style="left:29px;top:327px" width="10" height="10" viewBox="0 0 10 10"><rect x="0.500" y="0.500" width="9" height="9" rx="1.500" fill="#fbfbfb" stroke="#9b9b9b"/><path d="M2.500 5h5" stroke="#3a4ea8" stroke-width="1.200"/><path d="M5 2.500v5" stroke="#3a4ea8" stroke-width="1.200"/></svg>
<svg style="left:47px;top:324px" width="17" height="17" viewBox="0 0 17 17"><rect x="0.500" y="0.500" width="14" height="14" rx="2.500" fill="#f7dc55" stroke="#b08a10"/><rect x="2" y="2" width="11" height="11" rx="1.500" fill="none" stroke="#fdf1a6" stroke-width="1"/><path d="M9.800 3.200q-2-.6-2.300 1.800l-.9 5.200q-.3 1.600-1.700 1.200M5.200 7h4.300" stroke="#6b4d00" stroke-width="1.300" fill="none"/><circle cx="12.500" cy="13" r="2.600" fill="#f2c40f" stroke="#8a6a00" stroke-width="0.800"/></svg>
<div class="t " style="left:69px;top:325.8px;font-size:12.5px;color:#000;letter-spacing:-0.15px">9.21</div>
</div>
<div class="a" style="left:243px;top:87px;width:16px;height:338px;background:#f0f0f0;border-left:1px solid #e6e6e6"></div>
<svg style="left:243px;top:87px" width="16" height="338"><path d="M4.500 12L8 8l3.500 4z" fill="#444"/><path d="M4.500 327L8 331l3.500-4z" fill="#444"/></svg>
<div class="a" style="left:244px;top:112px;width:14px;height:28px;border:1px solid #979797;border-radius:2px;background:linear-gradient(90deg,#f4f4f4,#dcdcdc 50%,#cfcfcf 51%,#e3e3e3)"></div>
<svg style="left:247px;top:122px" width="8" height="8"><path d="M0 1.500h8M0 3.500h8M0 5.500h8" stroke="#666" stroke-width="1"/></svg>
<div class="a" style="left:3px;top:426px;width:256px;height:1px;background:#3c3c3c;"></div>
<div class="a" style="left:3px;top:427px;width:256px;height:1px;background:#9a9a9a;"></div>
<div class="a" style="left:6px;top:426px;width:43px;height:22px;background:#fff;border:1.500px solid #222;border-top:none;border-radius:0 0 3px 3px;box-shadow:1px 1px 0 #777"></div>
<div class="t " style="left:-172.5px;width:400px;text-align:center;top:431.5px;font-size:12px;color:#000;">常用</div>
<div class="t " style="left:60px;top:431.0px;font-size:12px;color:#8a8a8a;">收藏夹</div>
<div class="a" style="left:106px;top:430px;width:1px;height:15px;background:#777;"></div>
<div class="a" style="left:3px;top:454px;width:242px;height:15px;background:linear-gradient(90deg,#b6cbe5,#c6d6ea 55%,#d6e2f0);border-top:1px solid #e4ecf5"></div>
<div class="t " style="left:6px;top:455.5px;font-size:12px;color:#4a5a70;letter-spacing:-0.3px">市场报价: 16:59:13</div>
<svg style="left:248px;top:458px" width="9" height="9"><path d="M1 1l6.500 6.500M7.500 1L1 7.500" stroke="#000" stroke-width="1.800"/></svg>
<div class="a" style="left:3px;top:471px;width:256px;height:284px;background:#fff;border-left:1px solid #a5acb5;border-top:1px solid #a5acb5"></div>
<div class="a" style="left:4px;top:472px;width:238px;height:21px;background:linear-gradient(#ffffff,#f4f5f7 60%,#e9ebee);border-bottom:1px solid #d5d5d5"></div>
<div class="a" style="left:92px;top:473px;width:1px;height:19px;background:#e2e3e6;"></div>
<div class="a" style="left:151px;top:473px;width:1px;height:19px;background:#e2e3e6;"></div>
<div class="a" style="left:210px;top:473px;width:1px;height:19px;background:#e2e3e6;"></div>
<div class="a" style="left:241px;top:473px;width:1px;height:19px;background:#e2e3e6;"></div>
<div class="t " style="left:9px;top:476.0px;font-size:12px;color:#000;">交易品种</div>
<div class="t " style="right:1772px;top:476.0px;font-size:12px;color:#000;">卖价</div>
<div class="t " style="right:1713px;top:476.0px;font-size:12px;color:#000;">买价</div>
<div class="t " style="right:1684px;top:476.0px;font-size:12px;color:#000;">!</div>
<div class="a" style="left:4px;top:494px;width:238px;height:261px;overflow:hidden">
<div class="a" style="left:0px;top:1px;width:238px;height:20px;background:#f5e89f;"></div>
<div class="a" style="left:0px;top:21px;width:238px;height:1px;background:#c9c9c9;"></div>
<svg style="left:4px;top:5px" width="12" height="12" viewBox="0 0 12 12"><path d="M6 0.500L11.500 6L6 11.500L0.500 6Z" fill="#18a018" stroke="#0a600a" stroke-width="0.800"/><path d="M6 3L8.500 6H7V9H5V6H3.500Z" fill="#fff" opacity="0.850"/></svg>
<div class="t " style="left:20px;top:5.0px;font-size:13px;color:#000;letter-spacing:-1.05px;-webkit-text-stroke:0.250px #000">USDCHF</div>
<div class="t" style="right:93px;top:5.0px;font-size:13px;color:#1a1aee;letter-spacing:-0.500px;-webkit-text-stroke:0.2px #1a1aee">0.97618</div>
<div class="t" style="right:34px;top:5.0px;font-size:13px;color:#1a1aee;letter-spacing:-0.500px;-webkit-text-stroke:0.2px #1a1aee">0.97623</div>
<div class="t" style="right:5px;top:5.0px;font-size:13px;color:#1a1aee;letter-spacing:-0.500px;-webkit-text-stroke:0.2px #1a1aee">5</div>
<div class="a" style="left:0px;top:22px;width:238px;height:20px;background:#f5e89f;"></div>
<div class="a" style="left:0px;top:42px;width:238px;height:1px;background:#c9c9c9;"></div>
<svg style="left:4px;top:26px" width="12" height="12" viewBox="0 0 12 12"><path d="M6 0.500L11.500 6L6 11.500L0.500 6Z" fill="#e03010" stroke="#901000" stroke-width="0.800"/><path d="M6 9L8.500 6H7V3H5V6H3.500Z" fill="#fff" opacity="0.850"/></svg>
<div class="t " style="left:20px;top:26.0px;font-size:13px;color:#000;letter-spacing:-1.05px;-webkit-text-stroke:0.250px #000">GBPUSD</div>
<div class="t" style="right:93px;top:26.0px;font-size:13px;color:#f01010;letter-spacing:-0.500px;-webkit-text-stroke:0.2px #f01010">1.31413</div>
<div class="t" style="right:34px;top:26.0px;font-size:13px;color:#f01010;letter-spacing:-0.500px;-webkit-text-stroke:0.2px #f01010">1.31417</div>
<div class="t" style="right:5px;top:26.0px;font-size:13px;color:#f01010;letter-spacing:-0.500px;-webkit-text-stroke:0.2px #f01010">4</div>
<div class="a" style="left:0px;top:43px;width:238px;height:20px;background:#f5e89f;"></div>
<div class="a" style="left:0px;top:63px;width:238px;height:1px;background:#c9c9c9;"></div>
<svg style="left:4px;top:47px" width="12" height="12" viewBox="0 0 12 12"><path d="M6 0.500L11.500 6L6 11.500L0.500 6Z" fill="#e03010" stroke="#901000" stroke-width="0.800"/><path d="M6 9L8.500 6H7V3H5V6H3.500Z" fill="#fff" opacity="0.850"/></svg>
<div class="t " style="left:20px;top:47.0px;font-size:13px;color:#000;letter-spacing:-1.05px;-webkit-text-stroke:0.250px #000">EURUSD</div>
<div class="t" style="right:93px;top:47.0px;font-size:13px;color:#f01010;letter-spacing:-0.500px;-webkit-text-stroke:0.2px #f01010">1.18311</div>
<div class="t" style="right:34px;top:47.0px;font-size:13px;color:#f01010;letter-spacing:-0.500px;-webkit-text-stroke:0.2px #f01010">1.18314</div>
<div class="t" style="right:5px;top:47.0px;font-size:13px;color:#f01010;letter-spacing:-0.500px;-webkit-text-stroke:0.2px #f01010">3</div>
<div class="a" style="left:0px;top:64px;width:238px;height:20px;background:#f5e89f;"></div>
<div class="a" style="left:0px;top:84px;width:238px;height:1px;background:#c9c9c9;"></div>
<svg style="left:4px;top:68px" width="12" height="12" viewBox="0 0 12 12"><path d="M6 0.500L11.500 6L6 11.500L0.500 6Z" fill="#e03010" stroke="#901000" stroke-width="0.800"/><path d="M6 9L8.500 6H7V3H5V6H3.500Z" fill="#fff" opacity="0.850"/></svg>
<div class="t " style="left:20px;top:68.0px;font-size:13px;color:#000;letter-spacing:-1.05px;-webkit-text-stroke:0.250px #000">USDJPY</div>
<div class="t" style="right:93px;top:68.0px;font-size:13px;color:#f01010;letter-spacing:-0.500px;-webkit-text-stroke:0.2px #f01010">112.396</div>
<div class="t" style="right:34px;top:68.0px;font-size:13px;color:#f01010;letter-spacing:-0.500px;-webkit-text-stroke:0.2px #f01010">112.399</div>
<div class="t" style="right:5px;top:68.0px;font-size:13px;color:#f01010;letter-spacing:-0.500px;-webkit-text-stroke:0.2px #f01010">3</div>
<div class="a" style="left:0px;top:85px;width:238px;height:20px;background:#f5e89f;"></div>
<div class="a" style="left:0px;top:105px;width:238px;height:1px;background:#c9c9c9;"></div>
<svg style="left:4px;top:89px" width="12" height="12" viewBox="0 0 12 12"><path d="M6 0.500L11.500 6L6 11.500L0.500 6Z" fill="#e03010" stroke="#901000" stroke-width="0.800"/><path d="M6 9L8.500 6H7V3H5V6H3.500Z" fill="#fff" opacity="0.850"/></svg>
<div class="t " style="left:20px;top:89.0px;font-size:13px;color:#000;letter-spacing:-1.05px;-webkit-text-stroke:0.250px #000">USDCAD</div>
<div class="t" style="right:93px;top:89.0px;font-size:13px;color:#f01010;letter-spacing:-0.500px;-webkit-text-stroke:0.2px #f01010">1.24897</div>
<div class="t" style="right:34px;top:89.0px;font-size:13px;color:#f01010;letter-spacing:-0.500px;-webkit-text-stroke:0.2px #f01010">1.24903</div>
<div class="t" style="right:5px;top:89.0px;font-size:13px;color:#f01010;letter-spacing:-0.500px;-webkit-text-stroke:0.2px #f01010">6</div>
<div class="a" style="left:0px;top:106px;width:238px;height:20px;background:#f5e89f;"></div>
<div class="a" style="left:0px;top:126px;width:238px;height:1px;background:#c9c9c9;"></div>
<svg style="left:4px;top:110px" width="12" height="12" viewBox="0 0 12 12"><path d="M6 0.500L11.500 6L6 11.500L0.500 6Z" fill="#18a018" stroke="#0a600a" stroke-width="0.800"/><path d="M6 3L8.500 6H7V9H5V6H3.500Z" fill="#fff" opacity="0.850"/></svg>
<div class="t " style="left:20px;top:110.0px;font-size:13px;color:#000;letter-spacing:-1.05px;-webkit-text-stroke:0.250px #000">AUDUSD</div>
<div class="t" style="right:93px;top:110.0px;font-size:13px;color:#1a1aee;letter-spacing:-0.500px;-webkit-text-stroke:0.2px #1a1aee">0.78107</div>
<div class="t" style="right:34px;top:110.0px;font-size:13px;color:#1a1aee;letter-spacing:-0.500px;-webkit-text-stroke:0.2px #1a1aee">0.78110</div>
<div class="t" style="right:5px;top:110.0px;font-size:13px;color:#1a1aee;letter-spacing:-0.500px;-webkit-text-stroke:0.2px #1a1aee">3</div>
<div class="a" style="left:0px;top:127px;width:238px;height:20px;background:#f1fdf0;"></div>
<div class="a" style="left:0px;top:147px;width:238px;height:1px;background:#c9c9c9;"></div>
<svg style="left:4px;top:131px" width="12" height="12" viewBox="0 0 12 12"><path d="M6 0.500L11.500 6L6 11.500L0.500 6Z" fill="#18a018" stroke="#0a600a" stroke-width="0.800"/><path d="M6 3L8.500 6H7V9H5V6H3.500Z" fill="#fff" opacity="0.850"/></svg>
<div class="t " style="left:20px;top:131.0px;font-size:13px;color:#000;letter-spacing:-1.05px;-webkit-text-stroke:0.250px #000">EURGBP</div>
<div class="t" style="right:93px;top:131.0px;font-size:13px;color:#1a1aee;letter-spacing:-0.500px;-webkit-text-stroke:0.2px #1a1aee">0.90030</div>
<div class="t" style="right:34px;top:131.0px;font-size:13px;color:#1a1aee;letter-spacing:-0.500px;-webkit-text-stroke:0.2px #1a1aee">0.90035</div>
<div class="t" style="right:5px;top:131.0px;font-size:13px;color:#1a1aee;letter-spacing:-0.500px;-webkit-text-stroke:0.2px #1a1aee">5</div>
<div class="a" style="left:0px;top:148px;width:238px;height:20px;background:#f1fdf0;"></div>
<div class="a" style="left:0px;top:168px;width:238px;height:1px;background:#c9c9c9;"></div>
<svg style="left:4px;top:152px" width="12" height="12" viewBox="0 0 12 12"><path d="M6 0.500L11.500 6L6 11.500L0.500 6Z" fill="#18a018" stroke="#0a600a" stroke-width="0.800"/><path d="M6 3L8.500 6H7V9H5V6H3.500Z" fill="#fff" opacity="0.850"/></svg>
<div class="t " style="left:20px;top:152.0px;font-size:13px;color:#000;letter-spacing:-1.05px;-webkit-text-stroke:0.250px #000">EURAUD</div>
<div class="t" style="right:93px;top:152.0px;font-size:13px;color:#1a1aee;letter-spacing:-0.500px;-webkit-text-stroke:0.2px #1a1aee">1.51463</div>
<div class="t" style="right:34px;top:152.0px;font-size:13px;color:#1a1aee;letter-spacing:-0.500px;-webkit-text-stroke:0.2px #1a1aee">1.51481</div>
<div class="t" style="right:5px;top:152.0px;font-size:13px;color:#1a1aee;letter-spacing:-0.500px;-webkit-text-stroke:0.2px #1a1aee">18</div>
<div class="a" style="left:0px;top:169px;width:238px;height:20px;background:#f1fdf0;"></div>
<div class="a" style="left:0px;top:189px;width:238px;height:1px;background:#c9c9c9;"></div>
<svg style="left:4px;top:173px" width="12" height="12" viewBox="0 0 12 12"><path d="M6 0.500L11.500 6L6 11.500L0.500 6Z" fill="#18a018" stroke="#0a600a" stroke-width="0.800"/><path d="M6 3L8.500 6H7V9H5V6H3.500Z" fill="#fff" opacity="0.850"/></svg>
<div class="t " style="left:20px;top:173.0px;font-size:13px;color:#000;letter-spacing:-1.05px;-webkit-text-stroke:0.250px #000">EURCHF</div>
<div class="t" style="right:93px;top:173.0px;font-size:13px;color:#1a1aee;letter-spacing:-0.500px;-webkit-text-stroke:0.2px #1a1aee">1.15495</div>
<div class="t" style="right:34px;top:173.0px;font-size:13px;color:#1a1aee;letter-spacing:-0.500px;-webkit-text-stroke:0.2px #1a1aee">1.15506</div>
<div class="t" style="right:5px;top:173.0px;font-size:13px;color:#1a1aee;letter-spacing:-0.500px;-webkit-text-stroke:0.2px #1a1aee">11</div>
<div class="a" style="left:0px;top:190px;width:238px;height:20px;background:#f1fdf0;"></div>
<div class="a" style="left:0px;top:210px;width:238px;height:1px;background:#c9c9c9;"></div>
<svg style="left:4px;top:194px" width="12" height="12" viewBox="0 0 12 12"><path d="M6 0.500L11.500 6L6 11.500L0.500 6Z" fill="#e03010" stroke="#901000" stroke-width="0.800"/><path d="M6 9L8.500 6H7V3H5V6H3.500Z" fill="#fff" opacity="0.850"/></svg>
<div class="t " style="left:20px;top:194.0px;font-size:13px;color:#000;letter-spacing:-1.05px;-webkit-text-stroke:0.250px #000">EURJPY</div>
<div class="t" style="right:93px;top:194.0px;font-size:13px;color:#f01010;letter-spacing:-0.500px;-webkit-text-stroke:0.2px #f01010">132.981</div>
<div class="t" style="right:34px;top:194.0px;font-size:13px;color:#f01010;letter-spacing:-0.500px;-webkit-text-stroke:0.2px #f01010">132.986</div>
<div class="t" style="right:5px;top:194.0px;font-size:13px;color:#f01010;letter-spacing:-0.500px;-webkit-text-stroke:0.2px #f01010">5</div>
<div class="a" style="left:0px;top:211px;width:238px;height:20px;background:#f1fdf0;"></div>
<div class="a" style="left:0px;top:231px;width:238px;height:1px;background:#c9c9c9;"></div>
<svg style="left:4px;top:215px" width="12" height="12" viewBox="0 0 12 12"><path d="M6 0.500L11.500 6L6 11.500L0.500 6Z" fill="#e03010" stroke="#901000" stroke-width="0.800"/><path d="M6 9L8.500 6H7V3H5V6H3.500Z" fill="#fff" opacity="0.850"/></svg>
<div class="t " style="left:20px;top:215.0px;font-size:13px;color:#000;letter-spacing:-1.05px;-webkit-text-stroke:0.250px #000">GBPCHF</div>
<div class="t" style="right:93px;top:215.0px;font-size:13px;color:#f01010;letter-spacing:-0.500px;-webkit-text-stroke:0.2px #f01010">1.28283</div>
<div class="t" style="right:34px;top:215.0px;font-size:13px;color:#f01010;letter-spacing:-0.500px;-webkit-text-stroke:0.2px #f01010">1.28295</div>
<div class="t" style="right:5px;top:215.0px;font-size:13px;color:#f01010;letter-spacing:-0.500px;-webkit-text-stroke:0.2px #f01010">12</div>
<div class="a" style="left:0px;top:232px;width:238px;height:20px;background:#f1fdf0;"></div>
<div class="a" style="left:0px;top:252px;width:238px;height:1px;background:#c9c9c9;"></div>
<svg style="left:4px;top:236px" width="12" height="12" viewBox="0 0 12 12"><path d="M6 0.500L11.500 6L6 11.500L0.500 6Z" fill="#e03010" stroke="#901000" stroke-width="0.800"/><path d="M6 9L8.500 6H7V3H5V6H3.500Z" fill="#fff" opacity="0.850"/></svg>
<div class="t " style="left:20px;top:236.0px;font-size:13px;color:#000;letter-spacing:-1.05px;-webkit-text-stroke:0.250px #000">CADJPY</div>
<div class="t" style="right:93px;top:236.0px;font-size:13px;color:#f01010;letter-spacing:-0.500px;-webkit-text-stroke:0.2px #f01010">89.986</div>
<div class="t" style="right:34px;top:236.0px;font-size:13px;color:#f01010;letter-spacing:-0.500px;-webkit-text-stroke:0.2px #f01010">90.003</div>
<div class="t" style="right:5px;top:236.0px;font-size:13px;color:#f01010;letter-spacing:-0.500px;-webkit-text-stroke:0.2px #f01010">17</div>
<div class="a" style="left:0px;top:253px;width:238px;height:20px;background:#f1fdf0;"></div>
<div class="a" style="left:0px;top:273px;width:238px;height:1px;background:#c9c9c9;"></div>
<svg style="left:4px;top:257px" width="12" height="12" viewBox="0 0 12 12"><path d="M6 0.500L11.500 6L6 11.500L0.500 6Z" fill="#e03010" stroke="#901000" stroke-width="0.800"/><path d="M6 9L8.500 6H7V3H5V6H3.500Z" fill="#fff" opacity="0.850"/></svg>
<div class="t " style="left:20px;top:257.0px;font-size:13px;color:#000;letter-spacing:-1.05px;-webkit-text-stroke:0.250px #000">GBPJPY</div>
<div class="t" style="right:93px;top:257.0px;font-size:13px;color:#f01010;letter-spacing:-0.500px;-webkit-text-stroke:0.2px #f01010">147.694</div>
<div class="t" style="right:34px;top:257.0px;font-size:13px;color:#f01010;letter-spacing:-0.500px;-webkit-text-stroke:0.2px #f01010">147.716</div>
<div class="t" style="right:5px;top:257.0px;font-size:13px;color:#f01010;letter-spacing:-0.500px;-webkit-text-stroke:0.2px #f01010">22</div>
<div class="a" style="left:88px;top:0px;width:1px;height:262px;background:#c9c9c9;"></div>
<div class="a" style="left:147px;top:0px;width:1px;height:262px;background:#c9c9c9;"></div>
<div class="a" style="left:206px;top:0px;width:1px;height:262px;background:#c9c9c9;"></div>
<div class="a" style="left:237px;top:0px;width:1px;height:262px;background:#c9c9c9;"></div>
</div>
<div class="a" style="left:243px;top:472px;width:16px;height:284px;background:#f0f0f0;border-left:1px solid #e6e6e6"></div>
<svg style="left:243px;top:472px" width="16" height="284"><path d="M4.500 12L8 8l3.500 4z" fill="#444"/><path d="M4.500 273L8 277l3.500-4z" fill="#444"/></svg>
<div class="a" style="left:244px;top:491px;width:14px;height:42px;border:1px solid #979797;border-radius:2px;background:linear-gradient(90deg,#f4f4f4,#dcdcdc 50%,#cfcfcf 51%,#e3e3e3)"></div>
<svg style="left:247px;top:508px" width="8" height="8"><path d="M0 1.500h8M0 3.500h8M0 5.500h8" stroke="#666" stroke-width="1"/></svg>
<div class="a" style="left:3px;top:755px;width:256px;height:1px;background:#3c3c3c;"></div>
<div class="a" style="left:3px;top:756px;width:256px;height:1px;background:#9a9a9a;"></div>
<div class="a" style="left:6px;top:755px;width:67px;height:22px;background:#fff;border:1.500px solid #222;border-top:none;border-radius:0 0 3px 3px;box-shadow:1px 1px 0 #777"></div>
<div class="t " style="left:-160.5px;width:400px;text-align:center;top:760.5px;font-size:12px;color:#000;">交易品种</div>
<div class="t " style="left:83px;top:760.0px;font-size:12px;color:#8a8a8a;">即时图</div>
<div class="a" style="left:129px;top:759px;width:1px;height:15px;background:#777;"></div>
<!-- parts.p30_chart -->
<div class="a" style="left:264px;top:70px;width:1654px;height:692px;background:#000;"></div>
<div class="a" style="left:1918px;top:70px;width:2px;height:716px;background:#f0f0f0;"></div>
<svg style="left:264px;top:70px" width="1654" height="692" viewBox="264 70 1654 692" ><g style="filter:blur(0.45px)"><path d="M299.5 73.300V740M331.5 73.300V740M363.5 73.300V740M395.5 73.300V740M427.5 73.300V740M459.5 73.300V740M491.5 73.300V740M523.5 73.300V740M555.5 73.300V740M587.5 73.300V740M619.5 73.300V740M651.5 73.300V740M683.5 73.300V740M715.5 73.300V740M747.5 73.300V740M779.5 73.300V740M811.5 73.300V740M843.5 73.300V740M875.5 73.300V740M907.5 73.300V740M939.5 73.300V740M971.5 73.300V740M1003.5 73.300V740M1035.5 73.300V740M1067.5 73.300V740M1099.5 73.300V740M1131.5 73.300V740M1163.5 73.300V740M1195.5 73.300V740M1227.5 73.300V740M1259.5 73.300V740M1291.5 73.300V740M1323.5 73.300V740M1355.5 73.300V740M1387.5 73.300V740M1419.5 73.300V740M1451.5 73.300V740M1483.5 73.300V740M1515.5 73.300V740M1547.5 73.300V740M1579.5 73.300V740M1611.5 73.300V740M1643.5 73.300V740M1675.5 73.300V740M1707.5 73.300V740M1739.5 73.300V740M1771.5 73.300V740M1803.5 73.300V740M1835.5 73.300V740M1867.5 73.300V740" stroke="#8e9eb0" stroke-width="2.200" stroke-dasharray="2.200 3.800" stroke-linecap="butt" fill="none"/><path d="M268 105.5H1876M268 138.5H1876M268 171.5H1876M268 204.5H1876M268 237.5H1876M268 270.5H1876M268 303.5H1876M268 336.5H1876M268 369.5H1876M268 402.5H1876M268 435.5H1876M268 468.5H1876M268 501.5H1876M268 534.5H1876M268 566.5H1876" stroke="#8e9eb0" stroke-width="2.200" stroke-dasharray="2.200 3.800" stroke-linecap="butt" fill="none"/><path d="M268 353.500H1876" stroke="#8c9aaa" stroke-width="1.600"/><path d="M271.5 144V153M275.5 142V151M279.5 122V155M283.5 122V130M287.5 119V132M291.5 115V141M295.5 123V134M299.5 123V142M303.5 135V144M307.5 135V147M311.5 121V143M315.5 122V131M319.5 123V135M323.5 127V154M327.5 140V153M331.5 137V152M335.5 139V153M339.5 129V149M343.5 124V146M347.5 97V315M351.5 273V282M355.5 266V282M359.5 260V286M363.5 270V282M367.5 265V285M371.5 276V300M375.5 293V300M379.5 283V302M383.5 283V301M387.5 281V291M391.5 276V293M395.5 274V287M399.5 254V279M403.5 251V267M407.5 245V258M411.5 245V256M415.5 249V271M419.5 244V264M423.5 236V260M427.5 224V246M431.5 202V238M435.5 204V211M439.5 206V223M443.5 217V226M447.5 221V236M451.5 215V228M455.5 210V221M459.5 205V230M463.5 207V218M467.5 206V216M471.5 198V224M475.5 192V203M479.5 191V211M483.5 183V199M487.5 179V194M491.5 175V188M495.5 150V191M499.5 135V162M503.5 133V152M507.5 149V178M511.5 174V188M515.5 177V189M519.5 177V190M523.5 177V189M527.5 174V189M531.5 177V198M535.5 184V214M539.5 199V218M543.5 203V217M547.5 204V224M551.5 251V279M555.5 241V257M559.5 231V251M563.5 222V243M567.5 226V238M571.5 229V235M575.5 228V243M579.5 214V236M583.5 221V229M587.5 226V247M591.5 233V262M595.5 249V267M599.5 255V281M603.5 263V294M607.5 292V304M611.5 290V304M615.5 291V304M619.5 288V304M623.5 288V319M627.5 312V340M631.5 328V347M635.5 330V342M639.5 325V344M643.5 323V335M647.5 322V336M651.5 316V327M655.5 312V323M659.5 312V325M663.5 318V330M667.5 317V333M671.5 313V323M675.5 309V330M679.5 308V341M683.5 325V340M687.5 333V368M691.5 360V376M695.5 369V381M699.5 370V403M703.5 396V419M707.5 400V422M711.5 405V420M715.5 410V430M719.5 418V429M723.5 410V435M727.5 383V420M731.5 384V398M735.5 386V411M739.5 390V410M743.5 394V413M747.5 394V413M751.5 402V413M755.5 405V414M759.5 405V413M763.5 406V413M767.5 403V410M771.5 403V413M775.5 403V424M779.5 417V445M783.5 437V457M787.5 441V469M791.5 447V471M795.5 458V473M799.5 457V468M803.5 452V483M807.5 474V498M811.5 479V496M815.5 462V488M819.5 456V472M823.5 426V467M827.5 438V459M831.5 440V455M835.5 442V458M839.5 450V466M843.5 456V465M847.5 460V464M851.5 452V466M855.5 450V468M859.5 460V468M863.5 463V478M867.5 465V479M871.5 470V486M875.5 474V490M879.5 451V483M883.5 425V459M887.5 420V436M891.5 421V433M895.5 418V433M899.5 417V432M903.5 405V426M907.5 392V407M911.5 397V414M915.5 408V416M919.5 406V415M923.5 392V411M927.5 396V410M931.5 406V412M935.5 406V416M939.5 411V417M943.5 411V423M947.5 406V423M951.5 407V416M955.5 409V422M959.5 417V431M963.5 407V437M967.5 412V423M971.5 403V426M975.5 393V409M979.5 391V405M983.5 386V397M987.5 385V393M991.5 374V392M995.5 361V379M999.5 352V401M1003.5 366V395M1007.5 364V383M1011.5 374V390M1015.5 384V396M1019.5 379V394M1023.5 367V384M1027.5 372V386M1031.5 380V400M1035.5 377V397M1039.5 368V392M1043.5 376V405M1047.5 396V421M1051.5 418V422M1055.5 417V429M1059.5 420V434M1063.5 423V439M1067.5 430V440M1071.5 433V473M1075.5 465V471M1079.5 460V486M1083.5 465V485M1087.5 461V468M1091.5 451V469M1095.5 451V467M1099.5 453V475M1103.5 468V475M1107.5 455V473M1111.5 460V468M1115.5 461V472M1119.5 464V478M1123.5 467V479M1127.5 471V479M1131.5 462V486M1135.5 462V480M1139.5 472V490M1143.5 486V511M1147.5 497V516M1151.5 504V517M1155.5 505V524M1159.5 505V515M1163.5 494V516M1167.5 472V507M1171.5 467V477M1175.5 464V474M1179.5 451V468M1183.5 449V460M1187.5 445V457M1191.5 446V463M1195.5 440V451M1199.5 432V446M1203.5 439V455M1207.5 446V457M1211.5 449V455M1215.5 451V460M1219.5 455V467M1223.5 445V469M1227.5 463V472M1231.5 439V470M1235.5 425V464M1239.5 425V435M1243.5 417V438M1247.5 413V437M1251.5 426V444M1255.5 430V437M1259.5 426V437M1263.5 428V445M1267.5 440V450M1271.5 442V455M1275.5 430V450M1279.5 418V442M1283.5 418V432M1287.5 425V443M1291.5 433V448M1295.5 440V450M1299.5 439V453M1303.5 436V448M1307.5 437V449M1311.5 433V448M1315.5 430V444M1319.5 438V444M1323.5 429V451M1327.5 441V453M1331.5 440V452M1335.5 440V454M1339.5 438V452M1343.5 437V446M1347.5 440V454M1351.5 441V452M1355.5 437V458M1359.5 424V446M1363.5 420V439M1367.5 420V428M1371.5 420V458M1375.5 441V467M1379.5 461V477M1383.5 469V486M1387.5 484V504M1391.5 490V516M1395.5 496V521M1399.5 508V514M1403.5 505V512M1407.5 504V516M1411.5 498V508M1415.5 500V514M1419.5 498V510M1423.5 499V507M1427.5 502V511M1431.5 498V511M1435.5 499V517M1439.5 505V519M1443.5 511V526M1447.5 518V527M1451.5 519V529M1455.5 520V534M1459.5 525V532M1463.5 517V533M1467.5 509V537M1471.5 502V519M1475.5 497V557M1479.5 511V523M1483.5 472V523M1487.5 469V493M1491.5 471V485M1495.5 482V493M1499.5 467V490M1503.5 468V477M1507.5 461V478M1511.5 470V481M1515.5 462V478M1519.5 458V477M1523.5 461V478M1527.5 462V472M1531.5 465V474M1535.5 459V469M1539.5 463V475M1543.5 468V474M1547.5 468V494M1551.5 480V487M1555.5 476V489M1559.5 460V482M1563.5 455V469M1567.5 453V468M1571.5 449V469M1575.5 466V473M1579.5 465V473M1583.5 463V474M1587.5 453V468M1591.5 453V461M1595.5 452V464M1599.5 454V461M1603.5 451V468M1607.5 452V475M1611.5 456V488M1615.5 458V466M1619.5 456V472M1623.5 423V461M1627.5 420V429M1631.5 421V444M1635.5 429V437M1639.5 425V435M1643.5 417V437M1647.5 413V435M1651.5 419V435M1655.5 387V430M1659.5 381V415M1663.5 398V413M1667.5 399V414M1671.5 393V408M1675.5 373V397M1679.5 374V390M1683.5 377V399M1687.5 382V388M1691.5 383V389M1695.5 368V399M1699.5 369V383M1703.5 377V388M1707.5 375V387M1711.5 370V384M1715.5 366V383M1719.5 361V379M1723.5 371V393M1727.5 380V392M1731.5 368V388M1735.5 368V381M1739.5 353V375M1743.5 348V369M1747.5 355V363M1751.5 356V394M1755.5 367V389M1759.5 353V378M1763.5 336V365M1767.5 318V349M1771.5 321V346M1775.5 336V342M1779.5 330V347M1783.5 328V338M1787.5 321V345M1791.5 297V328M1795.5 301V312M1799.5 302V322M1803.5 314V322M1807.5 311V320M1811.5 309V326M1815.5 298V315M1819.5 297V316M1823.5 289V307M1827.5 280V298M1831.5 280V301M1835.5 288V313M1839.5 302V321M1843.5 309V315M1847.5 305V333M1851.5 325V331M1855.5 316V331M1859.5 316V329M1863.5 317V355" stroke="#00d800" stroke-width="1.600" fill="none"/><path d="M270.5 148.5H272.5V150.5H270.5ZM278.5 125.5H280.5V147.5H278.5ZM286.5 125.5H288.5V127.5H286.5ZM294.5 126.5H296.5V130.5H294.5ZM310.5 126.5H312.5V139.5H310.5ZM326.5 148.5H328.5V151.5H326.5ZM334.5 144.5H336.5V148.5H334.5ZM338.5 138.5H340.5V143.5H338.5ZM342.5 130.5H344.5V137.5H342.5ZM354.5 271.5H356.5V278.5H354.5ZM378.5 292.5H380.5V297.5H378.5ZM382.5 287.5H384.5V291.5H382.5ZM390.5 281.5H392.5V286.5H390.5ZM394.5 275.5H396.5V280.5H394.5ZM398.5 263.5H400.5V274.5H398.5ZM402.5 254.5H404.5V262.5H402.5ZM406.5 251.5H408.5V253.5H406.5ZM418.5 252.5H420.5V262.5H418.5ZM422.5 239.5H424.5V251.5H422.5ZM426.5 231.5H428.5V238.5H426.5ZM430.5 206.5H432.5V230.5H430.5ZM446.5 225.5H448.5V225.5H446.5ZM450.5 219.5H452.5V224.5H450.5ZM454.5 216.5H456.5V218.5H454.5ZM458.5 215.5H460.5V215.5H458.5ZM462.5 209.5H464.5V214.5H462.5ZM470.5 201.5H472.5V210.5H470.5ZM474.5 196.5H476.5V200.5H474.5ZM478.5 192.5H480.5V195.5H478.5ZM482.5 189.5H484.5V191.5H482.5ZM486.5 185.5H488.5V188.5H486.5ZM494.5 154.5H496.5V184.5H494.5ZM498.5 142.5H500.5V153.5H498.5ZM514.5 184.5H516.5V186.5H514.5ZM522.5 178.5H524.5V184.5H522.5ZM542.5 209.5H544.5V211.5H542.5ZM550.5 253.5H552.5V267.5H550.5ZM554.5 243.5H556.5V252.5H554.5ZM558.5 235.5H560.5V242.5H558.5ZM562.5 228.5H564.5V234.5H562.5ZM570.5 231.5H572.5V232.5H570.5ZM574.5 231.5H576.5V231.5H574.5ZM578.5 225.5H580.5V230.5H578.5ZM614.5 297.5H616.5V301.5H614.5ZM618.5 292.5H620.5V296.5H618.5ZM634.5 335.5H636.5V337.5H634.5ZM638.5 330.5H640.5V334.5H638.5ZM646.5 325.5H648.5V331.5H646.5ZM650.5 321.5H652.5V324.5H650.5ZM654.5 317.5H656.5V320.5H654.5ZM666.5 321.5H668.5V321.5H666.5ZM670.5 320.5H672.5V320.5H670.5ZM718.5 425.5H720.5V426.5H718.5ZM722.5 418.5H724.5V424.5H722.5ZM726.5 387.5H728.5V417.5H726.5ZM738.5 399.5H740.5V403.5H738.5ZM746.5 406.5H748.5V407.5H746.5ZM758.5 407.5H760.5V410.5H758.5ZM766.5 404.5H768.5V407.5H766.5ZM790.5 461.5H792.5V463.5H790.5ZM798.5 460.5H800.5V464.5H798.5ZM810.5 486.5H812.5V488.5H810.5ZM814.5 467.5H816.5V485.5H814.5ZM818.5 460.5H820.5V466.5H818.5ZM822.5 440.5H824.5V459.5H822.5ZM846.5 461.5H848.5V461.5H846.5ZM850.5 459.5H852.5V460.5H850.5ZM858.5 464.5H860.5V464.5H858.5ZM866.5 475.5H868.5V475.5H866.5ZM874.5 479.5H876.5V483.5H874.5ZM878.5 452.5H880.5V478.5H878.5ZM882.5 435.5H884.5V451.5H882.5ZM886.5 428.5H888.5V434.5H886.5ZM890.5 425.5H892.5V427.5H890.5ZM898.5 423.5H900.5V424.5H898.5ZM902.5 406.5H904.5V422.5H902.5ZM906.5 400.5H908.5V405.5H906.5ZM918.5 410.5H920.5V412.5H918.5ZM922.5 398.5H924.5V409.5H922.5ZM938.5 413.5H940.5V414.5H938.5ZM946.5 409.5H948.5V417.5H946.5ZM962.5 414.5H964.5V423.5H962.5ZM970.5 405.5H972.5V418.5H970.5ZM974.5 398.5H976.5V404.5H974.5ZM978.5 395.5H980.5V397.5H978.5ZM982.5 392.5H984.5V394.5H982.5ZM986.5 387.5H988.5V391.5H986.5ZM990.5 375.5H992.5V386.5H990.5ZM994.5 365.5H996.5V374.5H994.5ZM1002.5 369.5H1004.5V391.5H1002.5ZM1018.5 380.5H1020.5V390.5H1018.5ZM1022.5 373.5H1024.5V379.5H1022.5ZM1034.5 385.5H1036.5V389.5H1034.5ZM1038.5 378.5H1040.5V384.5H1038.5ZM1050.5 420.5H1052.5V420.5H1050.5ZM1082.5 467.5H1084.5V481.5H1082.5ZM1086.5 464.5H1088.5V466.5H1086.5ZM1090.5 461.5H1092.5V463.5H1090.5ZM1094.5 457.5H1096.5V460.5H1094.5ZM1106.5 463.5H1108.5V471.5H1106.5ZM1122.5 475.5H1124.5V475.5H1122.5ZM1130.5 472.5H1132.5V477.5H1130.5ZM1150.5 507.5H1152.5V507.5H1150.5ZM1158.5 509.5H1160.5V511.5H1158.5ZM1162.5 500.5H1164.5V508.5H1162.5ZM1166.5 474.5H1168.5V499.5H1166.5ZM1170.5 471.5H1172.5V473.5H1170.5ZM1174.5 465.5H1176.5V470.5H1174.5ZM1178.5 459.5H1180.5V464.5H1178.5ZM1182.5 453.5H1184.5V458.5H1182.5ZM1190.5 448.5H1192.5V453.5H1190.5ZM1194.5 445.5H1196.5V447.5H1194.5ZM1198.5 443.5H1200.5V444.5H1198.5ZM1210.5 453.5H1212.5V453.5H1210.5ZM1230.5 450.5H1232.5V465.5H1230.5ZM1234.5 430.5H1236.5V449.5H1234.5ZM1238.5 427.5H1240.5V429.5H1238.5ZM1258.5 430.5H1260.5V432.5H1258.5ZM1270.5 444.5H1272.5V447.5H1270.5ZM1274.5 433.5H1276.5V443.5H1274.5ZM1278.5 420.5H1280.5V432.5H1278.5ZM1294.5 442.5H1296.5V445.5H1294.5ZM1298.5 440.5H1300.5V441.5H1298.5ZM1302.5 440.5H1304.5V440.5H1302.5ZM1306.5 439.5H1308.5V439.5H1306.5ZM1310.5 438.5H1312.5V438.5H1310.5ZM1326.5 444.5H1328.5V446.5H1326.5ZM1334.5 448.5H1336.5V449.5H1334.5ZM1338.5 443.5H1340.5V447.5H1338.5ZM1346.5 444.5H1348.5V444.5H1346.5ZM1354.5 445.5H1356.5V445.5H1354.5ZM1358.5 435.5H1360.5V444.5H1358.5ZM1362.5 426.5H1364.5V434.5H1362.5ZM1394.5 510.5H1396.5V510.5H1394.5ZM1402.5 509.5H1404.5V510.5H1402.5ZM1406.5 506.5H1408.5V508.5H1406.5ZM1410.5 503.5H1412.5V505.5H1410.5ZM1418.5 504.5H1420.5V506.5H1418.5ZM1430.5 502.5H1432.5V508.5H1430.5ZM1446.5 522.5H1448.5V524.5H1446.5ZM1462.5 525.5H1464.5V528.5H1462.5ZM1466.5 514.5H1468.5V524.5H1466.5ZM1470.5 509.5H1472.5V513.5H1470.5ZM1482.5 483.5H1484.5V521.5H1482.5ZM1486.5 475.5H1488.5V482.5H1486.5ZM1498.5 474.5H1500.5V484.5H1498.5ZM1502.5 473.5H1504.5V473.5H1502.5ZM1510.5 475.5H1512.5V475.5H1510.5ZM1514.5 464.5H1516.5V474.5H1514.5ZM1522.5 467.5H1524.5V474.5H1522.5ZM1530.5 467.5H1532.5V469.5H1530.5ZM1534.5 465.5H1536.5V466.5H1534.5ZM1554.5 478.5H1556.5V485.5H1554.5ZM1558.5 465.5H1560.5V477.5H1558.5ZM1562.5 462.5H1564.5V464.5H1562.5ZM1566.5 457.5H1568.5V461.5H1566.5ZM1578.5 469.5H1580.5V470.5H1578.5ZM1582.5 464.5H1584.5V468.5H1582.5ZM1586.5 459.5H1588.5V463.5H1586.5ZM1590.5 454.5H1592.5V458.5H1590.5ZM1610.5 462.5H1612.5V472.5H1610.5ZM1614.5 459.5H1616.5V461.5H1614.5ZM1622.5 426.5H1624.5V459.5H1622.5ZM1626.5 425.5H1628.5V425.5H1626.5ZM1634.5 431.5H1636.5V431.5H1634.5ZM1638.5 426.5H1640.5V430.5H1638.5ZM1642.5 424.5H1644.5V425.5H1642.5ZM1650.5 424.5H1652.5V429.5H1650.5ZM1654.5 391.5H1656.5V423.5H1654.5ZM1666.5 401.5H1668.5V408.5H1666.5ZM1670.5 395.5H1672.5V400.5H1670.5ZM1674.5 377.5H1676.5V394.5H1674.5ZM1686.5 386.5H1688.5V386.5H1686.5ZM1694.5 372.5H1696.5V386.5H1694.5ZM1706.5 380.5H1708.5V382.5H1706.5ZM1710.5 378.5H1712.5V379.5H1710.5ZM1714.5 371.5H1716.5V377.5H1714.5ZM1726.5 387.5H1728.5V387.5H1726.5ZM1730.5 377.5H1732.5V386.5H1730.5ZM1734.5 370.5H1736.5V376.5H1734.5ZM1738.5 362.5H1740.5V369.5H1738.5ZM1742.5 359.5H1744.5V361.5H1742.5ZM1754.5 370.5H1756.5V386.5H1754.5ZM1758.5 361.5H1760.5V369.5H1758.5ZM1762.5 338.5H1764.5V360.5H1762.5ZM1766.5 323.5H1768.5V337.5H1766.5ZM1778.5 332.5H1780.5V339.5H1778.5ZM1786.5 326.5H1788.5V336.5H1786.5ZM1790.5 307.5H1792.5V325.5H1790.5ZM1802.5 319.5H1804.5V319.5H1802.5ZM1806.5 313.5H1808.5V318.5H1806.5ZM1810.5 310.5H1812.5V312.5H1810.5ZM1814.5 304.5H1816.5V309.5H1814.5ZM1818.5 298.5H1820.5V303.5H1818.5ZM1822.5 295.5H1824.5V297.5H1822.5ZM1826.5 290.5H1828.5V294.5H1826.5ZM1850.5 327.5H1852.5V329.5H1850.5ZM1854.5 324.5H1856.5V326.5H1854.5Z" stroke="#10f810" stroke-width="1.500" fill="#00a000"/><path d="M274.5 148.5H276.5V148.5H274.5ZM282.5 125.5H284.5V127.5H282.5ZM290.5 125.5H292.5V130.5H290.5ZM298.5 126.5H300.5V137.5H298.5ZM302.5 138.5H304.5V138.5H302.5ZM306.5 139.5H308.5V139.5H306.5ZM314.5 126.5H316.5V128.5H314.5ZM318.5 129.5H320.5V131.5H318.5ZM322.5 132.5H324.5V151.5H322.5ZM330.5 148.5H332.5V148.5H330.5ZM346.5 127.5H348.5V276.5H346.5ZM350.5 277.5H352.5V278.5H350.5ZM358.5 271.5H360.5V277.5H358.5ZM362.5 278.5H364.5V278.5H362.5ZM366.5 278.5H368.5V281.5H366.5ZM370.5 282.5H372.5V294.5H370.5ZM374.5 295.5H376.5V297.5H374.5ZM386.5 287.5H388.5V287.5H386.5ZM410.5 251.5H412.5V254.5H410.5ZM414.5 255.5H416.5V262.5H414.5ZM434.5 206.5H436.5V209.5H434.5ZM438.5 210.5H440.5V220.5H438.5ZM442.5 221.5H444.5V224.5H442.5ZM466.5 209.5H468.5V210.5H466.5ZM490.5 185.5H492.5V185.5H490.5ZM502.5 142.5H504.5V149.5H502.5ZM506.5 150.5H508.5V175.5H506.5ZM510.5 176.5H512.5V186.5H510.5ZM518.5 184.5H520.5V184.5H518.5ZM526.5 178.5H528.5V180.5H526.5ZM530.5 181.5H532.5V192.5H530.5ZM534.5 193.5H536.5V206.5H534.5ZM538.5 207.5H540.5V211.5H538.5ZM546.5 209.5H548.5V215.5H546.5ZM566.5 228.5H568.5V232.5H566.5ZM582.5 225.5H584.5V227.5H582.5ZM586.5 228.5H588.5V238.5H586.5ZM590.5 239.5H592.5V253.5H590.5ZM594.5 254.5H596.5V261.5H594.5ZM598.5 262.5H600.5V269.5H598.5ZM602.5 270.5H604.5V292.5H602.5ZM606.5 293.5H608.5V299.5H606.5ZM610.5 300.5H612.5V301.5H610.5ZM622.5 292.5H624.5V312.5H622.5ZM626.5 313.5H628.5V334.5H626.5ZM630.5 335.5H632.5V337.5H630.5ZM642.5 330.5H644.5V331.5H642.5ZM658.5 317.5H660.5V319.5H658.5ZM662.5 320.5H664.5V321.5H662.5ZM674.5 320.5H676.5V320.5H674.5ZM678.5 321.5H680.5V334.5H678.5ZM682.5 335.5H684.5V337.5H682.5ZM686.5 338.5H688.5V362.5H686.5ZM690.5 363.5H692.5V370.5H690.5ZM694.5 371.5H696.5V374.5H694.5ZM698.5 375.5H700.5V400.5H698.5ZM702.5 401.5H704.5V403.5H702.5ZM706.5 404.5H708.5V407.5H706.5ZM710.5 408.5H712.5V410.5H710.5ZM714.5 411.5H716.5V426.5H714.5ZM730.5 387.5H732.5V391.5H730.5ZM734.5 392.5H736.5V403.5H734.5ZM742.5 399.5H744.5V407.5H742.5ZM750.5 406.5H752.5V407.5H750.5ZM754.5 408.5H756.5V410.5H754.5ZM762.5 407.5H764.5V407.5H762.5ZM770.5 404.5H772.5V410.5H770.5ZM774.5 411.5H776.5V420.5H774.5ZM778.5 421.5H780.5V442.5H778.5ZM782.5 443.5H784.5V446.5H782.5ZM786.5 447.5H788.5V463.5H786.5ZM794.5 461.5H796.5V464.5H794.5ZM802.5 460.5H804.5V477.5H802.5ZM806.5 478.5H808.5V488.5H806.5ZM826.5 440.5H828.5V444.5H826.5ZM830.5 445.5H832.5V448.5H830.5ZM834.5 449.5H836.5V455.5H834.5ZM838.5 456.5H840.5V460.5H838.5ZM842.5 461.5H844.5V461.5H842.5ZM854.5 459.5H856.5V463.5H854.5ZM862.5 464.5H864.5V475.5H862.5ZM870.5 475.5H872.5V483.5H870.5ZM894.5 425.5H896.5V425.5H894.5ZM910.5 400.5H912.5V412.5H910.5ZM914.5 413.5H916.5V413.5H914.5ZM926.5 398.5H928.5V407.5H926.5ZM930.5 408.5H932.5V409.5H930.5ZM934.5 410.5H936.5V414.5H934.5ZM942.5 413.5H944.5V417.5H942.5ZM950.5 409.5H952.5V412.5H950.5ZM954.5 413.5H956.5V418.5H954.5ZM958.5 419.5H960.5V423.5H958.5ZM966.5 414.5H968.5V418.5H966.5ZM998.5 365.5H1000.5V391.5H998.5ZM1006.5 369.5H1008.5V378.5H1006.5ZM1010.5 379.5H1012.5V384.5H1010.5ZM1014.5 385.5H1016.5V390.5H1014.5ZM1026.5 373.5H1028.5V380.5H1026.5ZM1030.5 381.5H1032.5V389.5H1030.5ZM1042.5 378.5H1044.5V402.5H1042.5ZM1046.5 403.5H1048.5V419.5H1046.5ZM1054.5 420.5H1056.5V423.5H1054.5ZM1058.5 424.5H1060.5V424.5H1058.5ZM1062.5 425.5H1064.5V435.5H1062.5ZM1066.5 436.5H1068.5V436.5H1066.5ZM1070.5 437.5H1072.5V468.5H1070.5ZM1074.5 469.5H1076.5V469.5H1074.5ZM1078.5 470.5H1080.5V481.5H1078.5ZM1098.5 457.5H1100.5V470.5H1098.5ZM1102.5 471.5H1104.5V471.5H1102.5ZM1110.5 463.5H1112.5V465.5H1110.5ZM1114.5 466.5H1116.5V467.5H1114.5ZM1118.5 468.5H1120.5V475.5H1118.5ZM1126.5 475.5H1128.5V477.5H1126.5ZM1134.5 472.5H1136.5V474.5H1134.5ZM1138.5 475.5H1140.5V487.5H1138.5ZM1142.5 488.5H1144.5V502.5H1142.5ZM1146.5 503.5H1148.5V507.5H1146.5ZM1154.5 507.5H1156.5V511.5H1154.5ZM1186.5 453.5H1188.5V453.5H1186.5ZM1202.5 443.5H1204.5V449.5H1202.5ZM1206.5 450.5H1208.5V452.5H1206.5ZM1214.5 453.5H1216.5V457.5H1214.5ZM1218.5 458.5H1220.5V458.5H1218.5ZM1222.5 458.5H1224.5V464.5H1222.5ZM1226.5 465.5H1228.5V465.5H1226.5ZM1242.5 427.5H1244.5V430.5H1242.5ZM1246.5 431.5H1248.5V431.5H1246.5ZM1250.5 432.5H1252.5V432.5H1250.5ZM1254.5 432.5H1256.5V432.5H1254.5ZM1262.5 430.5H1264.5V443.5H1262.5ZM1266.5 444.5H1268.5V447.5H1266.5ZM1282.5 420.5H1284.5V426.5H1282.5ZM1286.5 427.5H1288.5V434.5H1286.5ZM1290.5 435.5H1292.5V445.5H1290.5ZM1314.5 438.5H1316.5V439.5H1314.5ZM1318.5 440.5H1320.5V441.5H1318.5ZM1322.5 442.5H1324.5V446.5H1322.5ZM1330.5 444.5H1332.5V449.5H1330.5ZM1342.5 443.5H1344.5V444.5H1342.5ZM1350.5 444.5H1352.5V444.5H1350.5ZM1366.5 426.5H1368.5V426.5H1366.5ZM1370.5 427.5H1372.5V451.5H1370.5ZM1374.5 452.5H1376.5V463.5H1374.5ZM1378.5 464.5H1380.5V471.5H1378.5ZM1382.5 472.5H1384.5V484.5H1382.5ZM1386.5 485.5H1388.5V498.5H1386.5ZM1390.5 499.5H1392.5V510.5H1390.5ZM1398.5 510.5H1400.5V510.5H1398.5ZM1414.5 503.5H1416.5V506.5H1414.5ZM1422.5 504.5H1424.5V504.5H1422.5ZM1426.5 505.5H1428.5V508.5H1426.5ZM1434.5 502.5H1436.5V512.5H1434.5ZM1438.5 513.5H1440.5V515.5H1438.5ZM1442.5 516.5H1444.5V524.5H1442.5ZM1450.5 522.5H1452.5V522.5H1450.5ZM1454.5 522.5H1456.5V527.5H1454.5ZM1458.5 528.5H1460.5V528.5H1458.5ZM1474.5 509.5H1476.5V513.5H1474.5ZM1478.5 514.5H1480.5V521.5H1478.5ZM1490.5 475.5H1492.5V482.5H1490.5ZM1494.5 483.5H1496.5V484.5H1494.5ZM1506.5 473.5H1508.5V475.5H1506.5ZM1518.5 464.5H1520.5V474.5H1518.5ZM1526.5 467.5H1528.5V469.5H1526.5ZM1538.5 465.5H1540.5V468.5H1538.5ZM1542.5 469.5H1544.5V470.5H1542.5ZM1546.5 471.5H1548.5V482.5H1546.5ZM1550.5 483.5H1552.5V485.5H1550.5ZM1570.5 457.5H1572.5V466.5H1570.5ZM1574.5 467.5H1576.5V470.5H1574.5ZM1594.5 454.5H1596.5V454.5H1594.5ZM1598.5 455.5H1600.5V455.5H1598.5ZM1602.5 455.5H1604.5V465.5H1602.5ZM1606.5 466.5H1608.5V472.5H1606.5ZM1618.5 459.5H1620.5V459.5H1618.5ZM1630.5 425.5H1632.5V431.5H1630.5ZM1646.5 424.5H1648.5V429.5H1646.5ZM1658.5 391.5H1660.5V408.5H1658.5ZM1662.5 409.5H1664.5V409.5H1662.5ZM1678.5 377.5H1680.5V386.5H1678.5ZM1682.5 387.5H1684.5V387.5H1682.5ZM1690.5 386.5H1692.5V386.5H1690.5ZM1698.5 372.5H1700.5V378.5H1698.5ZM1702.5 379.5H1704.5V382.5H1702.5ZM1718.5 371.5H1720.5V377.5H1718.5ZM1722.5 378.5H1724.5V387.5H1722.5ZM1746.5 359.5H1748.5V359.5H1746.5ZM1750.5 360.5H1752.5V386.5H1750.5ZM1770.5 323.5H1772.5V336.5H1770.5ZM1774.5 337.5H1776.5V339.5H1774.5ZM1782.5 332.5H1784.5V336.5H1782.5ZM1794.5 307.5H1796.5V308.5H1794.5ZM1798.5 309.5H1800.5V319.5H1798.5ZM1830.5 290.5H1832.5V292.5H1830.5ZM1834.5 293.5H1836.5V309.5H1834.5ZM1838.5 310.5H1840.5V310.5H1838.5ZM1842.5 310.5H1844.5V312.5H1842.5ZM1846.5 313.5H1848.5V329.5H1846.5ZM1858.5 324.5H1860.5V324.5H1858.5ZM1862.5 325.5H1864.5V348.5H1862.5Z" stroke="#40ff40" stroke-width="1.500" fill="#eaffea"/></g><path d="M266.500 73V758" stroke="#b8b8b8" stroke-width="2"/><path d="M266 73.500H1876" stroke="#d0d0d0" stroke-width="1"/><path d="M1876 73V741" stroke="#dcdcdc" stroke-width="1.600"/><path d="M266 572H1877" stroke="#d8d8d8" stroke-width="2"/><path d="M266 740.500H1877" stroke="#e8e8e8" stroke-width="1" stroke-dasharray="4 2"/><path d="M1877 105.5h3M1877 138.5h3M1877 171.5h3M1877 204.5h3M1877 237.5h3M1877 270.5h3M1877 303.5h3M1877 336.5h3M1877 369.5h3M1877 402.5h3M1877 435.5h3M1877 468.5h3M1877 501.5h3M1877 534.5h3M1877 566.5h3" stroke="#fff" stroke-width="1"/><path d="M267.5 741v3M331.5 741v3M395.5 741v3M459.5 741v3M523.5 741v3M587.5 741v3M651.5 741v3M715.5 741v3M779.5 741v3M843.5 741v3M907.5 741v3M971.5 741v3M1035.5 741v3M1099.5 741v3M1163.5 741v3M1227.5 741v3M1291.5 741v3M1355.5 741v3M1419.5 741v3M1483.5 741v3M1547.5 741v3M1611.5 741v3M1675.5 741v3M1739.5 741v3M1803.5 741v3M1867.5 741v3" stroke="#fff" stroke-width="1"/></svg>
<div class="t " style="left:1882px;top:101.0px;font-size:9px;color:#fff;letter-spacing:-0.05px;filter:blur(0.25px);-webkit-text-stroke:0.25px #fff">1.20265</div>
<div class="t " style="left:1882px;top:134.0px;font-size:9px;color:#fff;letter-spacing:-0.05px;filter:blur(0.25px);-webkit-text-stroke:0.25px #fff">1.20005</div>
<div class="t " style="left:1882px;top:167.0px;font-size:9px;color:#fff;letter-spacing:-0.05px;filter:blur(0.25px);-webkit-text-stroke:0.25px #fff">1.19745</div>
<div class="t " style="left:1882px;top:200.0px;font-size:9px;color:#fff;letter-spacing:-0.05px;filter:blur(0.25px);-webkit-text-stroke:0.25px #fff">1.19485</div>
<div class="t " style="left:1882px;top:233.0px;font-size:9px;color:#fff;letter-spacing:-0.05px;filter:blur(0.25px);-webkit-text-stroke:0.25px #fff">1.19220</div>
<div class="t " style="left:1882px;top:266.0px;font-size:9px;color:#fff;letter-spacing:-0.05px;filter:blur(0.25px);-webkit-text-stroke:0.25px #fff">1.18960</div>
<div class="t " style="left:1882px;top:299.0px;font-size:9px;color:#fff;letter-spacing:-0.05px;filter:blur(0.25px);-webkit-text-stroke:0.25px #fff">1.18700</div>
<div class="t " style="left:1882px;top:332.0px;font-size:9px;color:#fff;letter-spacing:-0.05px;filter:blur(0.25px);-webkit-text-stroke:0.25px #fff">1.18440</div>
<div class="t " style="left:1882px;top:365.0px;font-size:9px;color:#fff;letter-spacing:-0.05px;filter:blur(0.25px);-webkit-text-stroke:0.25px #fff">1.18175</div>
<div class="t " style="left:1882px;top:398.0px;font-size:9px;color:#fff;letter-spacing:-0.05px;filter:blur(0.25px);-webkit-text-stroke:0.25px #fff">1.17915</div>
<div class="t " style="left:1882px;top:431.0px;font-size:9px;color:#fff;letter-spacing:-0.05px;filter:blur(0.25px);-webkit-text-stroke:0.25px #fff">1.17655</div>
<div class="t " style="left:1882px;top:464.0px;font-size:9px;color:#fff;letter-spacing:-0.05px;filter:blur(0.25px);-webkit-text-stroke:0.25px #fff">1.17390</div>
<div class="t " style="left:1882px;top:497.0px;font-size:9px;color:#fff;letter-spacing:-0.05px;filter:blur(0.25px);-webkit-text-stroke:0.25px #fff">1.17130</div>
<div class="t " style="left:1882px;top:530.0px;font-size:9px;color:#fff;letter-spacing:-0.05px;filter:blur(0.25px);-webkit-text-stroke:0.25px #fff">1.16870</div>
<div class="t " style="left:1882px;top:563.0px;font-size:9px;color:#fff;letter-spacing:-0.05px;filter:blur(0.25px);-webkit-text-stroke:0.25px #fff">1.16610</div>
<div class="a" style="left:1877px;top:348px;width:41px;height:11px;background:#f6f6f6;"></div>
<div class="t " style="left:1882px;top:349.5px;font-size:9px;color:#000;letter-spacing:-0.05px">1.18305</div>
<div class="t " style="left:1881px;top:574.5px;font-size:9px;color:#fff;">1</div>
<div class="t " style="left:1881px;top:728.5px;font-size:9px;color:#fff;">0</div>
<div class="t " style="left:267px;top:744.8px;font-size:9.5px;color:#fff;letter-spacing:-0.25px;filter:blur(0.25px);-webkit-text-stroke:0.2px #fff">20 Sep 2017</div>
<div class="t " style="left:331px;top:744.8px;font-size:9.5px;color:#fff;letter-spacing:-0.25px;filter:blur(0.25px);-webkit-text-stroke:0.2px #fff">20 Sep 17:00</div>
<div class="t " style="left:395px;top:744.8px;font-size:9.5px;color:#fff;letter-spacing:-0.25px;filter:blur(0.25px);-webkit-text-stroke:0.2px #fff">21 Sep 09:00</div>
<div class="t " style="left:459px;top:744.8px;font-size:9.5px;color:#fff;letter-spacing:-0.25px;filter:blur(0.25px);-webkit-text-stroke:0.2px #fff">22 Sep 01:00</div>
<div class="t " style="left:523px;top:744.8px;font-size:9.5px;color:#fff;letter-spacing:-0.25px;filter:blur(0.25px);-webkit-text-stroke:0.2px #fff">22 Sep 17:00</div>
<div class="t " style="left:587px;top:744.8px;font-size:9.5px;color:#fff;letter-spacing:-0.25px;filter:blur(0.25px);-webkit-text-stroke:0.2px #fff">25 Sep 09:00</div>
<div class="t " style="left:651px;top:744.8px;font-size:9.5px;color:#fff;letter-spacing:-0.25px;filter:blur(0.25px);-webkit-text-stroke:0.2px #fff">26 Sep 01:00</div>
<div class="t " style="left:715px;top:744.8px;font-size:9.5px;color:#fff;letter-spacing:-0.25px;filter:blur(0.25px);-webkit-text-stroke:0.2px #fff">26 Sep 17:00</div>
<div class="t " style="left:779px;top:744.8px;font-size:9.5px;color:#fff;letter-spacing:-0.25px;filter:blur(0.25px);-webkit-text-stroke:0.2px #fff">27 Sep 09:00</div>
<div class="t " style="left:843px;top:744.8px;font-size:9.5px;color:#fff;letter-spacing:-0.25px;filter:blur(0.25px);-webkit-text-stroke:0.2px #fff">28 Sep 01:00</div>
<div class="t " style="left:907px;top:744.8px;font-size:9.5px;color:#fff;letter-spacing:-0.25px;filter:blur(0.25px);-webkit-text-stroke:0.2px #fff">28 Sep 17:00</div>
<div class="t " style="left:971px;top:744.8px;font-size:9.5px;color:#fff;letter-spacing:-0.25px;filter:blur(0.25px);-webkit-text-stroke:0.2px #fff">29 Sep 09:00</div>
<div class="t " style="left:1035px;top:744.8px;font-size:9.5px;color:#fff;letter-spacing:-0.25px;filter:blur(0.25px);-webkit-text-stroke:0.2px #fff">2 Oct 01:00</div>
<div class="t " style="left:1099px;top:744.8px;font-size:9.5px;color:#fff;letter-spacing:-0.25px;filter:blur(0.25px);-webkit-text-stroke:0.2px #fff">2 Oct 17:00</div>
<div class="t " style="left:1163px;top:744.8px;font-size:9.5px;color:#fff;letter-spacing:-0.25px;filter:blur(0.25px);-webkit-text-stroke:0.2px #fff">3 Oct 09:00</div>
<div class="t " style="left:1227px;top:744.8px;font-size:9.5px;color:#fff;letter-spacing:-0.25px;filter:blur(0.25px);-webkit-text-stroke:0.2px #fff">4 Oct 01:00</div>
<div class="t " style="left:1291px;top:744.8px;font-size:9.5px;color:#fff;letter-spacing:-0.25px;filter:blur(0.25px);-webkit-text-stroke:0.2px #fff">4 Oct 17:00</div>
<div class="t " style="left:1355px;top:744.8px;font-size:9.5px;color:#fff;letter-spacing:-0.25px;filter:blur(0.25px);-webkit-text-stroke:0.2px #fff">5 Oct 09:00</div>
<div class="t " style="left:1419px;top:744.8px;font-size:9.5px;color:#fff;letter-spacing:-0.25px;filter:blur(0.25px);-webkit-text-stroke:0.2px #fff">6 Oct 01:00</div>
<div class="t " style="left:1483px;top:744.8px;font-size:9.5px;color:#fff;letter-spacing:-0.25px;filter:blur(0.25px);-webkit-text-stroke:0.2px #fff">6 Oct 17:00</div>
<div class="t " style="left:1547px;top:744.8px;font-size:9.5px;color:#fff;letter-spacing:-0.25px;filter:blur(0.25px);-webkit-text-stroke:0.2px #fff">9 Oct 09:00</div>
<div class="t " style="left:1611px;top:744.8px;font-size:9.5px;color:#fff;letter-spacing:-0.25px;filter:blur(0.25px);-webkit-text-stroke:0.2px #fff">10 Oct 01:00</div>
<div class="t " style="left:1675px;top:744.8px;font-size:9.5px;color:#fff;letter-spacing:-0.25px;filter:blur(0.25px);-webkit-text-stroke:0.2px #fff">10 Oct 17:00</div>
<div class="t " style="left:1739px;top:744.8px;font-size:9.5px;color:#fff;letter-spacing:-0.25px;filter:blur(0.25px);-webkit-text-stroke:0.2px #fff">11 Oct 09:00</div>
<div class="t " style="left:1803px;top:744.8px;font-size:9.5px;color:#fff;letter-spacing:-0.25px;filter:blur(0.25px);-webkit-text-stroke:0.2px #fff">12 Oct 01:00</div>
<svg style="left:271px;top:78px" width="8" height="6"><path d="M0 0.500h7L3.500 4.500z" fill="#fff"/></svg>
<div class="t " style="left:282px;top:76.2px;font-size:9.5px;color:#fff;letter-spacing:-0.12px">EURUSD,H1&nbsp; 1.18467 1.18513 1.18305 1.18305</div>
<!-- parts.p40_sub -->
<div class="a" style="left:406px;top:551px;width:727px;height:44px;border:2px solid #dadada;filter:blur(0.4px)"></div>
<svg style="left:0;top:0" width="1920" height="1048"><path d="M431.500 496.300L675 559L673.300 553.800L692.800 570L666.500 575.300L669 571L431.300 497.600Z" fill="#f23a3a" style="filter:blur(0.5px)"/></svg>
<div class="t dv" style="left:282px;top:577.0px;font-size:9px;color:#fff;filter:blur(0.3px);-webkit-text-stroke:0.3px currentColor;letter-spacing:-0.2px">• Open Trade Analysis • 20.0000 44.0000</div>
<div class="t dv" style="left:303px;top:591.8px;font-size:9.5px;color:#7fd0dc;filter:blur(0.3px);-webkit-text-stroke:0.3px currentColor;letter-spacing:0.4px">EURUSD&nbsp; H1</div>
<div class="a" style="left:270px;top:607px;width:128px;height:1.5px;background:repeating-linear-gradient(90deg,#f0f0f0 0 1.5px,transparent 1.5px 4px);filter:blur(0.3px)"></div>
<div class="a" style="left:270px;top:646px;width:128px;height:1.5px;background:repeating-linear-gradient(90deg,#f0f0f0 0 1.5px,transparent 1.5px 4px);filter:blur(0.3px)"></div>
<div class="a" style="left:270px;top:688px;width:128px;height:1.5px;background:repeating-linear-gradient(90deg,#f0f0f0 0 1.5px,transparent 1.5px 4px);filter:blur(0.3px)"></div>
<div class="a" style="left:270px;top:711px;width:128px;height:1.5px;background:repeating-linear-gradient(90deg,#f0f0f0 0 1.5px,transparent 1.5px 4px);filter:blur(0.3px)"></div>
<div class="t dv" style="left:270px;top:613.6px;font-size:9.7px;color:#fff;filter:blur(0.3px);-webkit-text-stroke:0.3px currentColor;letter-spacing:0.2px">Stop Loss</div>
<div class="t dv" style="left:270px;top:629.1px;font-size:9.7px;color:#fff;filter:blur(0.3px);-webkit-text-stroke:0.3px currentColor;letter-spacing:0.2px">Pips to Stop</div>
<div class="t dv" style="left:270px;top:653.6px;font-size:9.7px;color:#fff;filter:blur(0.3px);-webkit-text-stroke:0.3px currentColor;letter-spacing:0.2px">Pips Profit</div>
<div class="t dv" style="left:270px;top:671.6px;font-size:9.7px;color:#fff;filter:blur(0.3px);-webkit-text-stroke:0.3px currentColor;letter-spacing:0.2px">% of Balance</div>
<div class="t dv" style="left:270px;top:695.6px;font-size:9.7px;color:#fff;filter:blur(0.3px);-webkit-text-stroke:0.3px currentColor;letter-spacing:0.2px">Max lot to trade</div>
<div class="t dv" style="left:437px;top:595.5px;font-size:12px;color:#efe9a8;filter:blur(0.3px);-webkit-text-stroke:0.3px currentColor;letter-spacing:0.2px">M1</div>
<div class="t dv" style="left:437px;top:610.5px;font-size:12px;color:#efe9a8;filter:blur(0.3px);-webkit-text-stroke:0.3px currentColor;letter-spacing:0.2px">M5</div>
<div class="t dv" style="left:437px;top:625.5px;font-size:12px;color:#efe9a8;filter:blur(0.3px);-webkit-text-stroke:0.3px currentColor;letter-spacing:0.2px">M15</div>
<div class="t dv" style="left:437px;top:640.5px;font-size:12px;color:#efe9a8;filter:blur(0.3px);-webkit-text-stroke:0.3px currentColor;letter-spacing:0.2px">M30</div>
<div class="t dv" style="left:437px;top:655.5px;font-size:12px;color:#efe9a8;filter:blur(0.3px);-webkit-text-stroke:0.3px currentColor;letter-spacing:0.2px">H1</div>
<div class="t dv" style="left:437px;top:670.5px;font-size:12px;color:#efe9a8;filter:blur(0.3px);-webkit-text-stroke:0.3px currentColor;letter-spacing:0.2px">H4</div>
<div class="t dv" style="left:437px;top:685.5px;font-size:12px;color:#efe9a8;filter:blur(0.3px);-webkit-text-stroke:0.3px currentColor;letter-spacing:0.2px">D1</div>
<div class="t dv" style="left:437px;top:700.5px;font-size:12px;color:#efe9a8;filter:blur(0.3px);-webkit-text-stroke:0.3px currentColor;letter-spacing:0.2px">W1</div>
<div class="t dv" style="left:290px;width:400px;text-align:center;top:579.5px;font-size:12px;color:#b4e0ea;filter:blur(0.3px);-webkit-text-stroke:0.3px currentColor;letter-spacing:-0.1px">MA20</div>
<div class="t dv" style="left:340px;width:400px;text-align:center;top:579.5px;font-size:12px;color:#b4e0ea;filter:blur(0.3px);-webkit-text-stroke:0.3px currentColor;letter-spacing:-0.1px">MA50</div>
<div class="t dv" style="left:390px;width:400px;text-align:center;top:579.5px;font-size:12px;color:#b4e0ea;filter:blur(0.3px);-webkit-text-stroke:0.3px currentColor;letter-spacing:-0.1px">MA100</div>
<div class="t dv" style="left:440px;width:400px;text-align:center;top:579.5px;font-size:12px;color:#b4e0ea;filter:blur(0.3px);-webkit-text-stroke:0.3px currentColor;letter-spacing:-0.1px">CCI14</div>
<div class="t dv" style="left:490px;width:400px;text-align:center;top:579.5px;font-size:12px;color:#b4e0ea;filter:blur(0.3px);-webkit-text-stroke:0.3px currentColor;letter-spacing:-0.1px">MACD</div>
<div class="t dv" style="left:540px;width:400px;text-align:center;top:579.5px;font-size:12px;color:#b4e0ea;filter:blur(0.3px);-webkit-text-stroke:0.3px currentColor;letter-spacing:-0.1px">ADX14</div>
<div class="t dv" style="left:590px;width:400px;text-align:center;top:579.5px;font-size:12px;color:#b4e0ea;filter:blur(0.3px);-webkit-text-stroke:0.3px currentColor;letter-spacing:-0.1px">BULLS</div>
<div class="t dv" style="left:640px;width:400px;text-align:center;top:579.5px;font-size:12px;color:#b4e0ea;filter:blur(0.3px);-webkit-text-stroke:0.3px currentColor;letter-spacing:-0.1px">BEARS</div>
<div class="t dv" style="left:690px;width:400px;text-align:center;top:579.5px;font-size:12px;color:#b4e0ea;filter:blur(0.3px);-webkit-text-stroke:0.3px currentColor;letter-spacing:-0.1px">STOCH</div>
<div class="t dv" style="left:740px;width:400px;text-align:center;top:579.5px;font-size:12px;color:#b4e0ea;filter:blur(0.3px);-webkit-text-stroke:0.3px currentColor;letter-spacing:-0.1px">RSI</div>
<div class="t dv" style="left:790px;width:400px;text-align:center;top:579.5px;font-size:12px;color:#b4e0ea;filter:blur(0.3px);-webkit-text-stroke:0.3px currentColor;letter-spacing:-0.1px">FORCE</div>
<div class="t dv" style="left:840px;width:400px;text-align:center;top:579.5px;font-size:12px;color:#b4e0ea;filter:blur(0.3px);-webkit-text-stroke:0.3px currentColor;letter-spacing:-0.1px">MOM</div>
<div class="t dv" style="left:890px;width:400px;text-align:center;top:579.5px;font-size:12px;color:#b4e0ea;filter:blur(0.3px);-webkit-text-stroke:0.3px currentColor;letter-spacing:-0.1px">DeM</div>
<div class="t dv" style="left:940px;width:400px;text-align:center;top:579.5px;font-size:12px;color:#b4e0ea;filter:blur(0.3px);-webkit-text-stroke:0.3px currentColor;letter-spacing:-0.1px">WAE</div>
<div class="t dv" style="left:290.5px;width:400px;text-align:center;top:597.5px;font-size:9px;color:#ff1010;filter:blur(0.3px);-webkit-text-stroke:0.3px currentColor;letter-spacing:0.8px">DOWN</div>
<div class="t dv" style="left:340.5px;width:400px;text-align:center;top:597.5px;font-size:9px;color:#ff1010;filter:blur(0.3px);-webkit-text-stroke:0.3px currentColor;letter-spacing:0.8px">DOWN</div>
<div class="t dv" style="left:390.5px;width:400px;text-align:center;top:597.5px;font-size:9px;color:#ff1010;filter:blur(0.3px);-webkit-text-stroke:0.3px currentColor;letter-spacing:0.8px">DOWN</div>
<div class="t dv" style="left:440.5px;width:400px;text-align:center;top:597.5px;font-size:9px;color:#ff1010;filter:blur(0.3px);-webkit-text-stroke:0.3px currentColor;letter-spacing:0.8px">DOWN</div>
<div class="t dv" style="left:490.5px;width:400px;text-align:center;top:597.5px;font-size:9px;color:#ff1010;filter:blur(0.3px);-webkit-text-stroke:0.3px currentColor;letter-spacing:0.8px">DOWN</div>
<div class="t dv" style="left:540.5px;width:400px;text-align:center;top:597.5px;font-size:9px;color:#ff1010;filter:blur(0.3px);-webkit-text-stroke:0.3px currentColor;letter-spacing:0.8px">DOWN</div>
<div class="t dv" style="left:590.5px;width:400px;text-align:center;top:597.5px;font-size:9px;color:#ff1010;filter:blur(0.3px);-webkit-text-stroke:0.3px currentColor;letter-spacing:0.8px">DOWN</div>
<div class="t dv" style="left:640.5px;width:400px;text-align:center;top:597.5px;font-size:9px;color:#ff1010;filter:blur(0.3px);-webkit-text-stroke:0.3px currentColor;letter-spacing:0.8px">DOWN</div>
<div class="t dv" style="left:690.5px;width:400px;text-align:center;top:597.5px;font-size:9px;color:#10e010;filter:blur(0.3px);-webkit-text-stroke:0.3px currentColor;letter-spacing:0.8px">UP</div>
<div class="t dv" style="left:740.5px;width:400px;text-align:center;top:597.5px;font-size:9px;color:#ff1010;filter:blur(0.3px);-webkit-text-stroke:0.3px currentColor;letter-spacing:0.8px">DOWN</div>
<div class="t dv" style="left:790.5px;width:400px;text-align:center;top:597.5px;font-size:9px;color:#ff1010;filter:blur(0.3px);-webkit-text-stroke:0.3px currentColor;letter-spacing:0.8px">DOWN</div>
<div class="t dv" style="left:840.5px;width:400px;text-align:center;top:597.5px;font-size:9px;color:#ff1010;filter:blur(0.3px);-webkit-text-stroke:0.3px currentColor;letter-spacing:0.8px">DOWN</div>
<div class="t dv" style="left:890.5px;width:400px;text-align:center;top:597.5px;font-size:9px;color:#10e010;filter:blur(0.3px);-webkit-text-stroke:0.3px currentColor;letter-spacing:0.8px">UP</div>
<div class="t dv" style="left:290.5px;width:400px;text-align:center;top:612.5px;font-size:9px;color:#ff1010;filter:blur(0.3px);-webkit-text-stroke:0.3px currentColor;letter-spacing:0.8px">DOWN</div>
<div class="t dv" style="left:340.5px;width:400px;text-align:center;top:612.5px;font-size:9px;color:#ff1010;filter:blur(0.3px);-webkit-text-stroke:0.3px currentColor;letter-spacing:0.8px">DOWN</div>
<div class="t dv" style="left:390.5px;width:400px;text-align:center;top:612.5px;font-size:9px;color:#ff1010;filter:blur(0.3px);-webkit-text-stroke:0.3px currentColor;letter-spacing:0.8px">DOWN</div>
<div class="t dv" style="left:440.5px;width:400px;text-align:center;top:612.5px;font-size:9px;color:#ff1010;filter:blur(0.3px);-webkit-text-stroke:0.3px currentColor;letter-spacing:0.8px">DOWN</div>
<div class="t dv" style="left:490.5px;width:400px;text-align:center;top:612.5px;font-size:9px;color:#ff1010;filter:blur(0.3px);-webkit-text-stroke:0.3px currentColor;letter-spacing:0.8px">DOWN</div>
<div class="t dv" style="left:540.5px;width:400px;text-align:center;top:612.5px;font-size:9px;color:#ff1010;filter:blur(0.3px);-webkit-text-stroke:0.3px currentColor;letter-spacing:0.8px">DOWN</div>
<div class="t dv" style="left:590.5px;width:400px;text-align:center;top:612.5px;font-size:9px;color:#ff1010;filter:blur(0.3px);-webkit-text-stroke:0.3px currentColor;letter-spacing:0.8px">DOWN</div>
<div class="t dv" style="left:640.5px;width:400px;text-align:center;top:612.5px;font-size:9px;color:#ff1010;filter:blur(0.3px);-webkit-text-stroke:0.3px currentColor;letter-spacing:0.8px">DOWN</div>
<div class="t dv" style="left:690.5px;width:400px;text-align:center;top:612.5px;font-size:9px;color:#10e010;filter:blur(0.3px);-webkit-text-stroke:0.3px currentColor;letter-spacing:0.8px">UP</div>
<div class="t dv" style="left:740.5px;width:400px;text-align:center;top:612.5px;font-size:9px;color:#ff1010;filter:blur(0.3px);-webkit-text-stroke:0.3px currentColor;letter-spacing:0.8px">DOWN</div>
<div class="t dv" style="left:790.5px;width:400px;text-align:center;top:612.5px;font-size:9px;color:#ff1010;filter:blur(0.3px);-webkit-text-stroke:0.3px currentColor;letter-spacing:0.8px">DOWN</div>
<div class="t dv" style="left:840.5px;width:400px;text-align:center;top:612.5px;font-size:9px;color:#ff1010;filter:blur(0.3px);-webkit-text-stroke:0.3px currentColor;letter-spacing:0.8px">DOWN</div>
<div class="t dv" style="left:890.5px;width:400px;text-align:center;top:612.5px;font-size:9px;color:#ff1010;filter:blur(0.3px);-webkit-text-stroke:0.3px currentColor;letter-spacing:0.8px">DOWN</div>
<div class="t dv" style="left:290.5px;width:400px;text-align:center;top:627.5px;font-size:9px;color:#ff1010;filter:blur(0.3px);-webkit-text-stroke:0.3px currentColor;letter-spacing:0.8px">DOWN</div>
<div class="t dv" style="left:340.5px;width:400px;text-align:center;top:627.5px;font-size:9px;color:#ff1010;filter:blur(0.3px);-webkit-text-stroke:0.3px currentColor;letter-spacing:0.8px">DOWN</div>
<div class="t dv" style="left:390.5px;width:400px;text-align:center;top:627.5px;font-size:9px;color:#ff1010;filter:blur(0.3px);-webkit-text-stroke:0.3px currentColor;letter-spacing:0.8px">DOWN</div>
<div class="t dv" style="left:440.5px;width:400px;text-align:center;top:627.5px;font-size:9px;color:#ff1010;filter:blur(0.3px);-webkit-text-stroke:0.3px currentColor;letter-spacing:0.8px">DOWN</div>
<div class="t dv" style="left:490.5px;width:400px;text-align:center;top:627.5px;font-size:9px;color:#ff1010;filter:blur(0.3px);-webkit-text-stroke:0.3px currentColor;letter-spacing:0.8px">DOWN</div>
<div class="t dv" style="left:540.5px;width:400px;text-align:center;top:627.5px;font-size:9px;color:#ff1010;filter:blur(0.3px);-webkit-text-stroke:0.3px currentColor;letter-spacing:0.8px">DOWN</div>
<div class="t dv" style="left:590.5px;width:400px;text-align:center;top:627.5px;font-size:9px;color:#ff1010;filter:blur(0.3px);-webkit-text-stroke:0.3px currentColor;letter-spacing:0.8px">DOWN</div>
<div class="t dv" style="left:640.5px;width:400px;text-align:center;top:627.5px;font-size:9px;color:#ff1010;filter:blur(0.3px);-webkit-text-stroke:0.3px currentColor;letter-spacing:0.8px">DOWN</div>
<div class="t dv" style="left:690.5px;width:400px;text-align:center;top:627.5px;font-size:9px;color:#ff1010;filter:blur(0.3px);-webkit-text-stroke:0.3px currentColor;letter-spacing:0.8px">DOWN</div>
<div class="t dv" style="left:740.5px;width:400px;text-align:center;top:627.5px;font-size:9px;color:#ff1010;filter:blur(0.3px);-webkit-text-stroke:0.3px currentColor;letter-spacing:0.8px">DOWN</div>
<div class="t dv" style="left:790.5px;width:400px;text-align:center;top:627.5px;font-size:9px;color:#ff1010;filter:blur(0.3px);-webkit-text-stroke:0.3px currentColor;letter-spacing:0.8px">DOWN</div>
<div class="t dv" style="left:840.5px;width:400px;text-align:center;top:627.5px;font-size:9px;color:#ff1010;filter:blur(0.3px);-webkit-text-stroke:0.3px currentColor;letter-spacing:0.8px">DOWN</div>
<div class="t dv" style="left:890.5px;width:400px;text-align:center;top:627.5px;font-size:9px;color:#ff1010;filter:blur(0.3px);-webkit-text-stroke:0.3px currentColor;letter-spacing:0.8px">DOWN</div>
<div class="t dv" style="left:290.5px;width:400px;text-align:center;top:642.5px;font-size:9px;color:#ff1010;filter:blur(0.3px);-webkit-text-stroke:0.3px currentColor;letter-spacing:0.8px">DOWN</div>
<div class="t dv" style="left:340.5px;width:400px;text-align:center;top:642.5px;font-size:9px;color:#ff1010;filter:blur(0.3px);-webkit-text-stroke:0.3px currentColor;letter-spacing:0.8px">DOWN</div>
<div class="t dv" style="left:390.5px;width:400px;text-align:center;top:642.5px;font-size:9px;color:#ff1010;filter:blur(0.3px);-webkit-text-stroke:0.3px currentColor;letter-spacing:0.8px">DOWN</div>
<div class="t dv" style="left:440.5px;width:400px;text-align:center;top:642.5px;font-size:9px;color:#ff1010;filter:blur(0.3px);-webkit-text-stroke:0.3px currentColor;letter-spacing:0.8px">DOWN</div>
<div class="t dv" style="left:490.5px;width:400px;text-align:center;top:642.5px;font-size:9px;color:#ff1010;filter:blur(0.3px);-webkit-text-stroke:0.3px currentColor;letter-spacing:0.8px">DOWN</div>
<div class="t dv" style="left:540.5px;width:400px;text-align:center;top:642.5px;font-size:9px;color:#ff1010;filter:blur(0.3px);-webkit-text-stroke:0.3px currentColor;letter-spacing:0.8px">DOWN</div>
<div class="t dv" style="left:590.5px;width:400px;text-align:center;top:642.5px;font-size:9px;color:#ff1010;filter:blur(0.3px);-webkit-text-stroke:0.3px currentColor;letter-spacing:0.8px">DOWN</div>
<div class="t dv" style="left:640.5px;width:400px;text-align:center;top:642.5px;font-size:9px;color:#ff1010;filter:blur(0.3px);-webkit-text-stroke:0.3px currentColor;letter-spacing:0.8px">DOWN</div>
<div class="t dv" style="left:690.5px;width:400px;text-align:center;top:642.5px;font-size:9px;color:#ff1010;filter:blur(0.3px);-webkit-text-stroke:0.3px currentColor;letter-spacing:0.8px">DOWN</div>
<div class="t dv" style="left:740.5px;width:400px;text-align:center;top:642.5px;font-size:9px;color:#ff1010;filter:blur(0.3px);-webkit-text-stroke:0.3px currentColor;letter-spacing:0.8px">DOWN</div>
<div class="t dv" style="left:790.5px;width:400px;text-align:center;top:642.5px;font-size:9px;color:#ff1010;filter:blur(0.3px);-webkit-text-stroke:0.3px currentColor;letter-spacing:0.8px">DOWN</div>
<div class="t dv" style="left:840.5px;width:400px;text-align:center;top:642.5px;font-size:9px;color:#ff1010;filter:blur(0.3px);-webkit-text-stroke:0.3px currentColor;letter-spacing:0.8px">DOWN</div>
<div class="t dv" style="left:890.5px;width:400px;text-align:center;top:642.5px;font-size:9px;color:#10e010;filter:blur(0.3px);-webkit-text-stroke:0.3px currentColor;letter-spacing:0.8px">UP</div>
<div class="t dv" style="left:290.5px;width:400px;text-align:center;top:657.5px;font-size:9px;color:#ff1010;filter:blur(0.3px);-webkit-text-stroke:0.3px currentColor;letter-spacing:0.8px">DOWN</div>
<div class="t dv" style="left:340.5px;width:400px;text-align:center;top:657.5px;font-size:9px;color:#ff1010;filter:blur(0.3px);-webkit-text-stroke:0.3px currentColor;letter-spacing:0.8px">DOWN</div>
<div class="t dv" style="left:390.5px;width:400px;text-align:center;top:657.5px;font-size:9px;color:#10e010;filter:blur(0.3px);-webkit-text-stroke:0.3px currentColor;letter-spacing:0.8px">UP</div>
<div class="t dv" style="left:440.5px;width:400px;text-align:center;top:657.5px;font-size:9px;color:#ff1010;filter:blur(0.3px);-webkit-text-stroke:0.3px currentColor;letter-spacing:0.8px">DOWN</div>
<div class="t dv" style="left:490.5px;width:400px;text-align:center;top:657.5px;font-size:9px;color:#ff1010;filter:blur(0.3px);-webkit-text-stroke:0.3px currentColor;letter-spacing:0.8px">DOWN</div>
<div class="t dv" style="left:540.5px;width:400px;text-align:center;top:657.5px;font-size:9px;color:#ff1010;filter:blur(0.3px);-webkit-text-stroke:0.3px currentColor;letter-spacing:0.8px">DOWN</div>
<div class="t dv" style="left:590.5px;width:400px;text-align:center;top:657.5px;font-size:9px;color:#ff1010;filter:blur(0.3px);-webkit-text-stroke:0.3px currentColor;letter-spacing:0.8px">DOWN</div>
<div class="t dv" style="left:640.5px;width:400px;text-align:center;top:657.5px;font-size:9px;color:#ff1010;filter:blur(0.3px);-webkit-text-stroke:0.3px currentColor;letter-spacing:0.8px">DOWN</div>
<div class="t dv" style="left:690.5px;width:400px;text-align:center;top:657.5px;font-size:9px;color:#ff1010;filter:blur(0.3px);-webkit-text-stroke:0.3px currentColor;letter-spacing:0.8px">DOWN</div>
<div class="t dv" style="left:740.5px;width:400px;text-align:center;top:657.5px;font-size:9px;color:#ff1010;filter:blur(0.3px);-webkit-text-stroke:0.3px currentColor;letter-spacing:0.8px">DOWN</div>
<div class="t dv" style="left:790.5px;width:400px;text-align:center;top:657.5px;font-size:9px;color:#ff1010;filter:blur(0.3px);-webkit-text-stroke:0.3px currentColor;letter-spacing:0.8px">DOWN</div>
<div class="t dv" style="left:840.5px;width:400px;text-align:center;top:657.5px;font-size:9px;color:#ff1010;filter:blur(0.3px);-webkit-text-stroke:0.3px currentColor;letter-spacing:0.8px">DOWN</div>
<div class="t dv" style="left:890.5px;width:400px;text-align:center;top:657.5px;font-size:9px;color:#ff1010;filter:blur(0.3px);-webkit-text-stroke:0.3px currentColor;letter-spacing:0.8px">DOWN</div>
<div class="t dv" style="left:290.5px;width:400px;text-align:center;top:672.5px;font-size:9px;color:#10e010;filter:blur(0.3px);-webkit-text-stroke:0.3px currentColor;letter-spacing:0.8px">UP</div>
<div class="t dv" style="left:340.5px;width:400px;text-align:center;top:672.5px;font-size:9px;color:#10e010;filter:blur(0.3px);-webkit-text-stroke:0.3px currentColor;letter-spacing:0.8px">UP</div>
<div class="t dv" style="left:390.5px;width:400px;text-align:center;top:672.5px;font-size:9px;color:#10e010;filter:blur(0.3px);-webkit-text-stroke:0.3px currentColor;letter-spacing:0.8px">UP</div>
<div class="t dv" style="left:440.5px;width:400px;text-align:center;top:672.5px;font-size:9px;color:#ff1010;filter:blur(0.3px);-webkit-text-stroke:0.3px currentColor;letter-spacing:0.8px">DOWN</div>
<div class="t dv" style="left:490.5px;width:400px;text-align:center;top:672.5px;font-size:9px;color:#10e010;filter:blur(0.3px);-webkit-text-stroke:0.3px currentColor;letter-spacing:0.8px">UP</div>
<div class="t dv" style="left:540.5px;width:400px;text-align:center;top:672.5px;font-size:9px;color:#ff1010;filter:blur(0.3px);-webkit-text-stroke:0.3px currentColor;letter-spacing:0.8px">DOWN</div>
<div class="t dv" style="left:590.5px;width:400px;text-align:center;top:672.5px;font-size:9px;color:#10e010;filter:blur(0.3px);-webkit-text-stroke:0.3px currentColor;letter-spacing:0.8px">UP</div>
<div class="t dv" style="left:640.5px;width:400px;text-align:center;top:672.5px;font-size:9px;color:#ff1010;filter:blur(0.3px);-webkit-text-stroke:0.3px currentColor;letter-spacing:0.8px">DOWN</div>
<div class="t dv" style="left:690.5px;width:400px;text-align:center;top:672.5px;font-size:9px;color:#ff1010;filter:blur(0.3px);-webkit-text-stroke:0.3px currentColor;letter-spacing:0.8px">DOWN</div>
<div class="t dv" style="left:740.5px;width:400px;text-align:center;top:672.5px;font-size:9px;color:#10e010;filter:blur(0.3px);-webkit-text-stroke:0.3px currentColor;letter-spacing:0.8px">UP</div>
<div class="t dv" style="left:790.5px;width:400px;text-align:center;top:672.5px;font-size:9px;color:#10e010;filter:blur(0.3px);-webkit-text-stroke:0.3px currentColor;letter-spacing:0.8px">UP</div>
<div class="t dv" style="left:840.5px;width:400px;text-align:center;top:672.5px;font-size:9px;color:#10e010;filter:blur(0.3px);-webkit-text-stroke:0.3px currentColor;letter-spacing:0.8px">UP</div>
<div class="t dv" style="left:890.5px;width:400px;text-align:center;top:672.5px;font-size:9px;color:#ff1010;filter:blur(0.3px);-webkit-text-stroke:0.3px currentColor;letter-spacing:0.8px">DOWN</div>
<div class="t dv" style="left:290.5px;width:400px;text-align:center;top:687.5px;font-size:9px;color:#10e010;filter:blur(0.3px);-webkit-text-stroke:0.3px currentColor;letter-spacing:0.8px">UP</div>
<div class="t dv" style="left:340.5px;width:400px;text-align:center;top:687.5px;font-size:9px;color:#10e010;filter:blur(0.3px);-webkit-text-stroke:0.3px currentColor;letter-spacing:0.8px">UP</div>
<div class="t dv" style="left:390.5px;width:400px;text-align:center;top:687.5px;font-size:9px;color:#10e010;filter:blur(0.3px);-webkit-text-stroke:0.3px currentColor;letter-spacing:0.8px">UP</div>
<div class="t dv" style="left:440.5px;width:400px;text-align:center;top:687.5px;font-size:9px;color:#10e010;filter:blur(0.3px);-webkit-text-stroke:0.3px currentColor;letter-spacing:0.8px">UP</div>
<div class="t dv" style="left:490.5px;width:400px;text-align:center;top:687.5px;font-size:9px;color:#10e010;filter:blur(0.3px);-webkit-text-stroke:0.3px currentColor;letter-spacing:0.8px">UP</div>
<div class="t dv" style="left:540.5px;width:400px;text-align:center;top:687.5px;font-size:9px;color:#10e010;filter:blur(0.3px);-webkit-text-stroke:0.3px currentColor;letter-spacing:0.8px">UP</div>
<div class="t dv" style="left:590.5px;width:400px;text-align:center;top:687.5px;font-size:9px;color:#10e010;filter:blur(0.3px);-webkit-text-stroke:0.3px currentColor;letter-spacing:0.8px">UP</div>
<div class="t dv" style="left:640.5px;width:400px;text-align:center;top:687.5px;font-size:9px;color:#10e010;filter:blur(0.3px);-webkit-text-stroke:0.3px currentColor;letter-spacing:0.8px">UP</div>
<div class="t dv" style="left:690.5px;width:400px;text-align:center;top:687.5px;font-size:9px;color:#10e010;filter:blur(0.3px);-webkit-text-stroke:0.3px currentColor;letter-spacing:0.8px">UP</div>
<div class="t dv" style="left:740.5px;width:400px;text-align:center;top:687.5px;font-size:9px;color:#10e010;filter:blur(0.3px);-webkit-text-stroke:0.3px currentColor;letter-spacing:0.8px">UP</div>
<div class="t dv" style="left:790.5px;width:400px;text-align:center;top:687.5px;font-size:9px;color:#ff1010;filter:blur(0.3px);-webkit-text-stroke:0.3px currentColor;letter-spacing:0.8px">DOWN</div>
<div class="t dv" style="left:840.5px;width:400px;text-align:center;top:687.5px;font-size:9px;color:#ff1010;filter:blur(0.3px);-webkit-text-stroke:0.3px currentColor;letter-spacing:0.8px">DOWN</div>
<div class="t dv" style="left:890.5px;width:400px;text-align:center;top:687.5px;font-size:9px;color:#ff1010;filter:blur(0.3px);-webkit-text-stroke:0.3px currentColor;letter-spacing:0.8px">DOWN</div>
<div class="t dv" style="left:290.5px;width:400px;text-align:center;top:702.5px;font-size:9px;color:#10e010;filter:blur(0.3px);-webkit-text-stroke:0.3px currentColor;letter-spacing:0.8px">UP</div>
<div class="t dv" style="left:340.5px;width:400px;text-align:center;top:702.5px;font-size:9px;color:#10e010;filter:blur(0.3px);-webkit-text-stroke:0.3px currentColor;letter-spacing:0.8px">UP</div>
<div class="t dv" style="left:390.5px;width:400px;text-align:center;top:702.5px;font-size:9px;color:#10e010;filter:blur(0.3px);-webkit-text-stroke:0.3px currentColor;letter-spacing:0.8px">UP</div>
<div class="t dv" style="left:440.5px;width:400px;text-align:center;top:702.5px;font-size:9px;color:#10e010;filter:blur(0.3px);-webkit-text-stroke:0.3px currentColor;letter-spacing:0.8px">UP</div>
<div class="t dv" style="left:490.5px;width:400px;text-align:center;top:702.5px;font-size:9px;color:#ff1010;filter:blur(0.3px);-webkit-text-stroke:0.3px currentColor;letter-spacing:0.8px">DOWN</div>
<div class="t dv" style="left:540.5px;width:400px;text-align:center;top:702.5px;font-size:9px;color:#10e010;filter:blur(0.3px);-webkit-text-stroke:0.3px currentColor;letter-spacing:0.8px">UP</div>
<div class="t dv" style="left:590.5px;width:400px;text-align:center;top:702.5px;font-size:9px;color:#10e010;filter:blur(0.3px);-webkit-text-stroke:0.3px currentColor;letter-spacing:0.8px">UP</div>
<div class="t dv" style="left:640.5px;width:400px;text-align:center;top:702.5px;font-size:9px;color:#ff1010;filter:blur(0.3px);-webkit-text-stroke:0.3px currentColor;letter-spacing:0.8px">DOWN</div>
<div class="t dv" style="left:690.5px;width:400px;text-align:center;top:702.5px;font-size:9px;color:#ff1010;filter:blur(0.3px);-webkit-text-stroke:0.3px currentColor;letter-spacing:0.8px">DOWN</div>
<div class="t dv" style="left:740.5px;width:400px;text-align:center;top:702.5px;font-size:9px;color:#10e010;filter:blur(0.3px);-webkit-text-stroke:0.3px currentColor;letter-spacing:0.8px">UP</div>
<div class="t dv" style="left:790.5px;width:400px;text-align:center;top:702.5px;font-size:9px;color:#10e010;filter:blur(0.3px);-webkit-text-stroke:0.3px currentColor;letter-spacing:0.8px">UP</div>
<div class="t dv" style="left:840.5px;width:400px;text-align:center;top:702.5px;font-size:9px;color:#10e010;filter:blur(0.3px);-webkit-text-stroke:0.3px currentColor;letter-spacing:0.8px">UP</div>
<div class="t dv" style="left:890.5px;width:400px;text-align:center;top:702.5px;font-size:9px;color:#10e010;filter:blur(0.3px);-webkit-text-stroke:0.3px currentColor;letter-spacing:0.8px">UP</div>
<div class="a" style="left:757px;top:616px;width:14px;height:1.5px;background:repeating-linear-gradient(90deg,#e01010 0 1.5px,transparent 1.5px 4px);filter:blur(0.3px)"></div>
<div class="a" style="left:757px;top:632px;width:14px;height:1.5px;background:repeating-linear-gradient(90deg,#e01010 0 1.5px,transparent 1.5px 4px);filter:blur(0.3px)"></div>
<div class="a" style="left:757px;top:659px;width:14px;height:1.5px;background:repeating-linear-gradient(90deg,#e01010 0 1.5px,transparent 1.5px 4px);filter:blur(0.3px)"></div>
<div class="a" style="left:757px;top:676px;width:14px;height:1.5px;background:repeating-linear-gradient(90deg,#e01010 0 1.5px,transparent 1.5px 4px);filter:blur(0.3px)"></div>
<div class="t dv" style="left:748px;top:695.8px;font-size:9.5px;color:#e8a000;filter:blur(0.3px);-webkit-text-stroke:0.3px currentColor;">0.00</div>
<div class="t dv" style="left:1175px;top:580.0px;font-size:11px;color:#ffa500;filter:blur(0.3px);-webkit-text-stroke:0.3px currentColor;">+</div>
<div class="t dv" style="left:1244px;top:580.0px;font-size:11px;color:#ffa500;filter:blur(0.3px);-webkit-text-stroke:0.3px currentColor;">+</div>
<div class="t dv" style="left:1196px;top:579.0px;font-size:12px;color:#ffa500;filter:blur(0.3px);-webkit-text-stroke:0.3px currentColor;">Trend</div>
<div class="a" style="left:1175px;top:596px;width:79px;height:1.5px;background:repeating-linear-gradient(90deg,#ffa500 0 1.5px,transparent 1.5px 3px);filter:blur(0.3px)"></div>
<div class="t dv" style="left:1175px;top:604.5px;font-size:12px;color:#10e010;filter:blur(0.3px);-webkit-text-stroke:0.3px currentColor;">UP</div>
<div class="t dv" style="left:1175px;top:624.5px;font-size:12px;color:#ff1010;filter:blur(0.3px);-webkit-text-stroke:0.3px currentColor;letter-spacing:-0.3px">DOWN</div>
<div class="a" style="left:1175px;top:645px;width:79px;height:1.5px;background:repeating-linear-gradient(90deg,#e01010 0 1.5px,transparent 1.5px 3px);filter:blur(0.3px)"></div>
<div class="a" style="left:1175px;top:648px;width:79px;height:1.5px;background:repeating-linear-gradient(90deg,#e01010 0 1.5px,transparent 1.5px 3px);filter:blur(0.3px)"></div>
<div class="a" style="left:1175px;top:708px;width:79px;height:1.5px;background:repeating-linear-gradient(90deg,#e01010 0 1.5px,transparent 1.5px 3px);filter:blur(0.3px)"></div>
<div class="a" style="left:1175px;top:711px;width:79px;height:1.5px;background:repeating-linear-gradient(90deg,#e01010 0 1.5px,transparent 1.5px 3px);filter:blur(0.3px)"></div>
<svg style="left:1180px;top:650px" width="70" height="32"><text x="35" y="26" text-anchor="middle" font-family="Liberation Sans,sans-serif" font-weight="bold" font-size="26.500" fill="#ff0808" stroke="#ff0808" stroke-width="0.800" textLength="58" lengthAdjust="spacingAndGlyphs" style="filter:blur(0.35px)">DOWN</text></svg>
<div class="t dv" style="left:1015px;width:400px;text-align:center;top:686.2px;font-size:11.5px;color:#f01010;filter:blur(0.3px);-webkit-text-stroke:0.3px currentColor;letter-spacing:1px">[strong]</div>
<div class="t dv" style="left:1278px;top:579.5px;font-size:12px;color:#ea6f8c;filter:blur(0.3px);-webkit-text-stroke:0.3px currentColor;letter-spacing:-0.15px">+Daily Pivots+</div>
<div class="a" style="left:1278px;top:596px;width:89px;height:1.5px;background:repeating-linear-gradient(90deg,#e07890 0 1.5px,transparent 1.5px 3px);filter:blur(0.3px)"></div>
<div class="t dv" style="left:1280px;top:604.5px;font-size:12px;color:#f0f0f0;filter:blur(0.3px);-webkit-text-stroke:0.3px currentColor;">R3</div>
<div class="t dv" style="left:1322px;top:604.5px;font-size:12px;color:#f0f0f0;filter:blur(0.3px);-webkit-text-stroke:0.3px currentColor;letter-spacing:0.3px">1.1963</div>
<div class="t dv" style="left:1280px;top:619.5px;font-size:12px;color:#e8e8e8;filter:blur(0.3px);-webkit-text-stroke:0.3px currentColor;">R2</div>
<div class="t dv" style="left:1322px;top:619.5px;font-size:12px;color:#e8e8e8;filter:blur(0.3px);-webkit-text-stroke:0.3px currentColor;letter-spacing:0.3px">1.1916</div>
<div class="t dv" style="left:1280px;top:634.5px;font-size:12px;color:#d8d8d8;filter:blur(0.3px);-webkit-text-stroke:0.3px currentColor;">R1</div>
<div class="t dv" style="left:1322px;top:634.5px;font-size:12px;color:#d8d8d8;filter:blur(0.3px);-webkit-text-stroke:0.3px currentColor;letter-spacing:0.3px">1.1889</div>
<div class="t dv" style="left:1280px;top:649.5px;font-size:12px;color:#8a8a8a;filter:blur(0.3px);-webkit-text-stroke:0.3px currentColor;">Pivot</div>
<div class="t dv" style="left:1322px;top:649.5px;font-size:12px;color:#8a8a8a;filter:blur(0.3px);-webkit-text-stroke:0.3px currentColor;letter-spacing:0.3px">1.1842</div>
<div class="t dv" style="left:1280px;top:664.5px;font-size:12px;color:#e0e0e0;filter:blur(0.3px);-webkit-text-stroke:0.3px currentColor;">S1</div>
<div class="t dv" style="left:1322px;top:664.5px;font-size:12px;color:#e0e0e0;filter:blur(0.3px);-webkit-text-stroke:0.3px currentColor;letter-spacing:0.3px">1.1815</div>
<div class="t dv" style="left:1280px;top:679.5px;font-size:12px;color:#e8e8e8;filter:blur(0.3px);-webkit-text-stroke:0.3px currentColor;">S2</div>
<div class="t dv" style="left:1322px;top:679.5px;font-size:12px;color:#e8e8e8;filter:blur(0.3px);-webkit-text-stroke:0.3px currentColor;letter-spacing:0.3px">1.1768</div>
<div class="t dv" style="left:1280px;top:694.5px;font-size:12px;color:#f4f4f4;filter:blur(0.3px);-webkit-text-stroke:0.3px currentColor;">S3</div>
<div class="t dv" style="left:1322px;top:694.5px;font-size:12px;color:#f4f4f4;filter:blur(0.3px);-webkit-text-stroke:0.3px currentColor;letter-spacing:0.3px">1.1742</div>
<div class="t dv" style="left:1387px;top:579.5px;font-size:12px;color:#35c0c0;filter:blur(0.3px);-webkit-text-stroke:0.3px currentColor;letter-spacing:-0.15px">+Daily Range+</div>
<div class="a" style="left:1387px;top:596px;width:91px;height:1.5px;background:repeating-linear-gradient(90deg,#35c0c0 0 1.5px,transparent 1.5px 3px);filter:blur(0.3px)"></div>
<div class="t dv" style="left:1391px;top:602.0px;font-size:12px;color:#ffffff;filter:blur(0.3px);-webkit-text-stroke:0.3px currentColor;">Today</div>
<div class="t dv" style="left:1836px;top:602.0px;font-size:12px;color:#ffffff;filter:blur(0.3px);-webkit-text-stroke:0.3px currentColor;letter-spacing:0.4px">39</div>
<div class="t dv" style="left:1391px;top:616.6px;font-size:12px;color:#f2f2f2;filter:blur(0.3px);-webkit-text-stroke:0.3px currentColor;">1 Day</div>
<div class="t dv" style="left:1836px;top:616.6px;font-size:12px;color:#f2f2f2;filter:blur(0.3px);-webkit-text-stroke:0.3px currentColor;letter-spacing:0.4px">74</div>
<div class="t dv" style="left:1391px;top:631.5px;font-size:12px;color:#e2e2e2;filter:blur(0.3px);-webkit-text-stroke:0.3px currentColor;">5 Days</div>
<div class="t dv" style="left:1836px;top:631.5px;font-size:12px;color:#e2e2e2;filter:blur(0.3px);-webkit-text-stroke:0.3px currentColor;letter-spacing:0.4px">69</div>
<div class="t dv" style="left:1391px;top:646.5px;font-size:12px;color:#d0d0d0;filter:blur(0.3px);-webkit-text-stroke:0.3px currentColor;">10 Days</div>
<div class="t dv" style="left:1836px;top:646.5px;font-size:12px;color:#d0d0d0;filter:blur(0.3px);-webkit-text-stroke:0.3px currentColor;letter-spacing:0.4px">70</div>
<div class="t dv" style="left:1391px;top:661.5px;font-size:12px;color:#a8a8a8;filter:blur(0.3px);-webkit-text-stroke:0.3px currentColor;">20 Days</div>
<div class="t dv" style="left:1836px;top:661.5px;font-size:12px;color:#a8a8a8;filter:blur(0.3px);-webkit-text-stroke:0.3px currentColor;letter-spacing:0.4px">80</div>
<div class="t dv" style="left:1391px;top:676.5px;font-size:12px;color:#6a6a6a;filter:blur(0.3px);-webkit-text-stroke:0.3px currentColor;">50 Days</div>
<div class="t dv" style="left:1836px;top:676.5px;font-size:12px;color:#6a6a6a;filter:blur(0.3px);-webkit-text-stroke:0.3px currentColor;letter-spacing:0.4px">86</div>
<div class="t dv" style="left:1391px;top:692.5px;font-size:12px;color:#f08a50;filter:blur(0.3px);-webkit-text-stroke:0.3px currentColor;">Average</div>
<div class="t dv" style="left:1836px;top:692.5px;font-size:12px;color:#f08a50;filter:blur(0.3px);-webkit-text-stroke:0.3px currentColor;letter-spacing:0.4px">76</div>
<div class="a" style="left:1391px;top:692px;width:86px;height:1.5px;background:repeating-linear-gradient(90deg,#f5deb3 0 1.5px,transparent 1.5px 3px);filter:blur(0.3px)"></div>
<div class="a" style="left:1391px;top:707px;width:86px;height:1.5px;background:repeating-linear-gradient(90deg,#f5deb3 0 1.5px,transparent 1.5px 3px);filter:blur(0.3px)"></div>
<div class="t dv" style="left:1597px;top:604.5px;font-size:12px;color:#f5deb3;filter:blur(0.3px);-webkit-text-stroke:0.3px currentColor;">12%</div>
<div class="t dv" style="left:1597px;top:624.5px;font-size:12px;color:#f0c8a0;filter:blur(0.3px);-webkit-text-stroke:0.3px currentColor;">88%</div>
<!-- parts.p50_bottom -->
<div class="a" style="left:264px;top:762px;width:1656px;height:20px;background:#f0f0f0;"></div>
<div class="a" style="left:264px;top:762px;width:1352px;height:1px;background:#fff;"></div>
<div class="a" style="left:263px;top:762px;width:1px;height:21px;background:#666;"></div>
<div class="t " style="left:278px;top:767.8px;font-size:12.5px;color:#6e6e6e;letter-spacing:-0.35px">USDCHF,H1</div>
<div class="t " style="left:366px;top:767.8px;font-size:12.5px;color:#6e6e6e;letter-spacing:-0.35px">USDCHF,H1</div>
<div class="t " style="left:454px;top:767.8px;font-size:12.5px;color:#6e6e6e;letter-spacing:-0.35px">USDJPY,H1</div>
<div class="t " style="left:539px;top:767.8px;font-size:12.5px;color:#6e6e6e;letter-spacing:-0.35px">USDCAD,H1</div>
<div class="t " style="left:632px;top:767.8px;font-size:12.5px;color:#6e6e6e;letter-spacing:-0.35px">EURUSD,H4</div>
<div class="t " style="left:724px;top:767.8px;font-size:12.5px;color:#6e6e6e;letter-spacing:-0.35px">GBPUSD,H1</div>
<div class="t " style="left:814px;top:767.8px;font-size:12.5px;color:#6e6e6e;letter-spacing:-0.35px">EURGBP,H1</div>
<div class="t " style="left:902px;top:767.8px;font-size:12.5px;color:#6e6e6e;letter-spacing:-0.35px">USDCHF,H1</div>
<div class="t " style="left:990px;top:767.8px;font-size:12.5px;color:#6e6e6e;letter-spacing:-0.35px">USDJPY,M15</div>
<div class="t " style="left:1087px;top:767.8px;font-size:12.5px;color:#6e6e6e;letter-spacing:-0.35px">EURUSD,H1</div>
<div class="t " style="left:1178px;top:767.8px;font-size:12.5px;color:#6e6e6e;letter-spacing:-0.35px">AUDUSD,H1</div>
<div class="t " style="left:1271px;top:767.8px;font-size:12.5px;color:#6e6e6e;letter-spacing:-0.35px">EURJPY,H1</div>
<div class="t " style="left:1356px;top:767.8px;font-size:12.5px;color:#6e6e6e;letter-spacing:-0.35px">AUDJPY,H1</div>
<div class="t " style="left:1443px;top:767.8px;font-size:12.5px;color:#6e6e6e;letter-spacing:-0.35px">NZDUSD,H1</div>
<div class="t " style="left:1536px;top:767.8px;font-size:12.5px;color:#6e6e6e;letter-spacing:-0.35px">EURUSD,H1</div>
<div class="a" style="left:354px;top:766px;width:1px;height:13px;background:#6a6a6a;"></div>
<div class="a" style="left:442px;top:766px;width:1px;height:13px;background:#6a6a6a;"></div>
<div class="a" style="left:527px;top:766px;width:1px;height:13px;background:#6a6a6a;"></div>
<div class="a" style="left:619px;top:766px;width:1px;height:13px;background:#6a6a6a;"></div>
<div class="a" style="left:711px;top:766px;width:1px;height:13px;background:#6a6a6a;"></div>
<div class="a" style="left:803px;top:766px;width:1px;height:13px;background:#6a6a6a;"></div>
<div class="a" style="left:891px;top:766px;width:1px;height:13px;background:#6a6a6a;"></div>
<div class="a" style="left:979px;top:766px;width:1px;height:13px;background:#6a6a6a;"></div>
<div class="a" style="left:1076px;top:766px;width:1px;height:13px;background:#6a6a6a;"></div>
<div class="a" style="left:1167px;top:766px;width:1px;height:13px;background:#6a6a6a;"></div>
<div class="a" style="left:1259px;top:766px;width:1px;height:13px;background:#6a6a6a;"></div>
<div class="a" style="left:1344px;top:766px;width:1px;height:13px;background:#6a6a6a;"></div>
<div class="a" style="left:1431px;top:766px;width:1px;height:13px;background:#6a6a6a;"></div>
<div class="a" style="left:1524px;top:766px;width:1px;height:13px;background:#6a6a6a;"></div>
<div class="a" style="left:1615px;top:761px;width:94px;height:21px;background:#fff;border:1.500px solid #1a1a1a;border-top:none;border-radius:0 0 3px 3px"></div>
<div class="t " style="left:1628px;top:767.8px;font-size:12.5px;color:#000;letter-spacing:-0.35px">EURUSD,H1</div>
<svg style="left:1884px;top:768px" width="30" height="10"><path d="M6 1L2 5l4 4zM22 1l4 4-4 4z" fill="#666"/></svg>
<div class="a" style="left:0px;top:782px;width:1920px;height:5px;background:#f0f0f0;"></div>
<div class="a" style="left:0px;top:786px;width:1920px;height:1px;background:#dadada;"></div>
<div class="a" style="left:0px;top:787px;width:1920px;height:231px;background:#f0f0f0;"></div>
<div class="a" style="left:0px;top:787px;width:15px;height:224px;background:linear-gradient(90deg,#dfe8f3,#c6d5e8);"></div>
<svg style="left:3px;top:789px" width="9" height="9"><path d="M1 1l6 6M7 1L1 7" stroke="#000" stroke-width="1.700"/></svg>
<div class="a" style="left:16px;top:788px;width:1900px;height:201px;background:#fff;"></div>
<div class="a" style="left:16px;top:788px;width:1900px;height:21px;background:linear-gradient(#ffffff,#f7f8fa 60%,#eceef1);border-bottom:1px solid #e0e0e0"></div>
<div class="a" style="left:160px;top:790px;width:1px;height:17px;background:#e3e4e8;"></div>
<div class="a" style="left:360px;top:790px;width:1px;height:17px;background:#e3e4e8;"></div>
<div class="a" style="left:460px;top:790px;width:1px;height:17px;background:#e3e4e8;"></div>
<div class="a" style="left:537px;top:790px;width:1px;height:17px;background:#e3e4e8;"></div>
<div class="a" style="left:637px;top:790px;width:1px;height:17px;background:#e3e4e8;"></div>
<div class="a" style="left:748px;top:790px;width:1px;height:17px;background:#e3e4e8;"></div>
<div class="a" style="left:859px;top:790px;width:1px;height:17px;background:#e3e4e8;"></div>
<div class="a" style="left:970px;top:790px;width:1px;height:17px;background:#e3e4e8;"></div>
<div class="a" style="left:1081px;top:790px;width:1px;height:17px;background:#e3e4e8;"></div>
<div class="a" style="left:1192px;top:790px;width:1px;height:17px;background:#e3e4e8;"></div>
<div class="a" style="left:1303px;top:790px;width:1px;height:17px;background:#e3e4e8;"></div>
<div class="a" style="left:1414px;top:790px;width:1px;height:17px;background:#e3e4e8;"></div>
<div class="a" style="left:1581px;top:790px;width:1px;height:17px;background:#e3e4e8;"></div>
<div class="t " style="left:22px;top:795.0px;font-size:12px;color:#000;">订单</div>
<div class="t " style="left:57px;top:796.5px;font-size:9px;color:#888;">/</div>
<div class="t " style="right:1566px;top:795.0px;font-size:12px;color:#000;">时间</div>
<div class="t " style="right:1466px;top:795.0px;font-size:12px;color:#000;">类型</div>
<div class="t " style="right:1389px;top:795.0px;font-size:12px;color:#000;">手数</div>
<div class="t " style="right:1289px;top:795.0px;font-size:12px;color:#000;">交易品种</div>
<div class="t " style="right:1178px;top:795.0px;font-size:12px;color:#000;">价格</div>
<div class="t " style="right:1067px;top:795.0px;font-size:12px;color:#000;">止损</div>
<div class="t " style="right:956px;top:795.0px;font-size:12px;color:#000;">获利</div>
<div class="t " style="right:845px;top:795.0px;font-size:12px;color:#000;">价格</div>
<div class="t " style="right:734px;top:795.0px;font-size:12px;color:#000;">手续费</div>
<div class="t " style="right:623px;top:795.0px;font-size:12px;color:#000;">税金</div>
<div class="t " style="right:512px;top:795.0px;font-size:12px;color:#000;">库存费</div>
<div class="t " style="right:345px;top:795.0px;font-size:12px;color:#000;">获利</div>
<div class="t " style="right:10px;top:795.0px;font-size:12px;color:#000;">注释</div>
<div class="a" style="left:16px;top:812px;width:1900px;height:21px;background:#c6c6c6;"></div>
<svg style="left:21px;top:818px" width="10" height="10"><circle cx="5" cy="5" r="3.500" fill="#d8d8d8" stroke="#8a8a8a" stroke-width="1.200"/></svg>
<div class="t " style="left:38px;top:817.0px;font-size:13px;color:#000;font-weight:bold;letter-spacing:-0.45px">余额: 0.87 USD&nbsp; 净值: 0.87&nbsp; 可用预付款: 0.87</div>
<div class="t " style="right:343px;top:817.2px;font-size:12.5px;color:#000;font-weight:bold;letter-spacing:-0.4px">0.00</div>
<div class="a" style="left:16px;top:989px;width:1894px;height:1px;background:#2a2a2a;"></div>
<div class="a" style="left:16px;top:990px;width:1894px;height:1px;background:#a0a0a0;"></div>
<div class="a" style="left:17px;top:988px;width:46px;height:23px;background:#fff;border:1.500px solid #1a1a1a;border-top:none;border-radius:0 0 3px 3px;box-shadow:1px 1px 0 #888"></div>
<div class="t " style="left:-160px;width:400px;text-align:center;top:994.0px;font-size:12px;color:#000;">交易</div>
<div class="t " style="left:72px;top:994.0px;font-size:12px;color:#757575;">展示</div>
<div class="t " style="left:116px;top:994.0px;font-size:12px;color:#757575;">账户历史</div>
<div class="t " style="left:184px;top:994.0px;font-size:12px;color:#757575;">新闻</div>
<div class="t " style="left:228px;top:994.0px;font-size:12px;color:#757575;">警报</div>
<div class="t " style="left:272px;top:994.0px;font-size:12px;color:#757575;">邮箱</div>
<div class="t " style="left:324px;top:994.0px;font-size:12px;color:#757575;">市场</div>
<div class="t " style="left:382px;top:994.0px;font-size:12px;color:#757575;">信号</div>
<div class="t " style="left:426px;top:994.0px;font-size:12px;color:#757575;">代码库</div>
<div class="t " style="left:482px;top:994.0px;font-size:12px;color:#757575;">EA</div>
<div class="t " style="left:517px;top:994.0px;font-size:12px;color:#757575;">日志</div>
<div class="a" style="left:104px;top:993px;width:1px;height:15px;background:#6a6a6a;"></div>
<div class="a" style="left:174px;top:993px;width:1px;height:15px;background:#6a6a6a;"></div>
<div class="a" style="left:218px;top:993px;width:1px;height:15px;background:#6a6a6a;"></div>
<div class="a" style="left:262px;top:993px;width:1px;height:15px;background:#6a6a6a;"></div>
<div class="a" style="left:314px;top:993px;width:1px;height:15px;background:#6a6a6a;"></div>
<div class="a" style="left:372px;top:993px;width:1px;height:15px;background:#6a6a6a;"></div>
<div class="a" style="left:416px;top:993px;width:1px;height:15px;background:#6a6a6a;"></div>
<div class="a" style="left:472px;top:993px;width:1px;height:15px;background:#6a6a6a;"></div>
<div class="a" style="left:506px;top:993px;width:1px;height:15px;background:#6a6a6a;"></div>
<div class="a" style="left:551px;top:993px;width:1px;height:15px;background:#6a6a6a;"></div>
<div class="t " style="left:299px;top:999.2px;font-size:9.5px;color:#e01020;font-weight:bold">7</div>
<div class="t " style="left:350px;top:999.2px;font-size:9.5px;color:#e01020;font-weight:bold">55</div>
<div class="t" style="left:1px;top:990px;font-size:11px;color:#667;line-height:10px;width:12px;transform:scaleX(0.9)">终<br>端</div>
<div class="a" style="left:0px;top:1011px;width:1920px;height:7px;background:#f0f0f0;"></div>
<div class="a" style="left:0px;top:1017px;width:1920px;height:1px;background:#d4d4d4;"></div>
<div class="a" style="left:0px;top:1018px;width:1920px;height:22px;background:#f1f1f1;"></div>
<div class="t " style="left:3px;top:1023.5px;font-size:12px;color:#000;letter-spacing:-0.2px">寻求帮助,请按F1键</div>
<div class="a" style="left:1124px;top:1021px;width:1px;height:17px;background:#c4c4c4;"></div>
<div class="a" style="left:1259px;top:1021px;width:1px;height:17px;background:#c4c4c4;"></div>
<div class="a" style="left:1376px;top:1021px;width:1px;height:17px;background:#c4c4c4;"></div>
<div class="a" style="left:1458px;top:1021px;width:1px;height:17px;background:#c4c4c4;"></div>
<div class="a" style="left:1539px;top:1021px;width:1px;height:17px;background:#c4c4c4;"></div>
<div class="a" style="left:1618px;top:1021px;width:1px;height:17px;background:#c4c4c4;"></div>
<div class="t " style="left:1130px;top:1023.0px;font-size:13px;color:#000;letter-spacing:-0.1px">Default</div>
<svg style="left:1782px;top:1024px" width="24" height="14"><path d="M1 13V10M4 13V9M7 13V8M10 13V6M13 13V5M16 13V3M19 13V2M22 13V0" stroke="#2d7f4f" stroke-width="2"/></svg>
<div class="a" style="left:0px;top:1040px;width:1920px;height:8px;background:linear-gradient(90deg,#3f80be 0%,#3a7cb8 30%,#2a70aa 55%,#3a84bc 67%,#225a98 76%,#1b4a86 100%);"></div>
<div class="a" style="left:0px;top:1039px;width:1920px;height:1px;background:#6c8fb4;"></div>
<div class="a" style="left:259px;top:1040px;width:53px;height:9px;border:1px solid #dcebf8;border-bottom:none;border-radius:3px 3px 0 0;background:linear-gradient(#c2daf0,#a4c6e6)"></div>
<div class="a" style="left:322px;top:1040px;width:50px;height:9px;border:1px solid #dcebf8;border-bottom:none;border-radius:3px 3px 0 0;background:linear-gradient(#c2daf0,#a4c6e6)"></div>
<div class="a" style="left:383px;top:1040px;width:51px;height:9px;border:1px solid #dcebf8;border-bottom:none;border-radius:3px 3px 0 0;background:linear-gradient(#c2daf0,#a4c6e6)"></div>
<div class="a" style="left:445px;top:1040px;width:58px;height:9px;border:1px solid #dcebf8;border-bottom:none;border-radius:3px 3px 0 0;background:linear-gradient(#c2daf0,#a4c6e6)"></div>
<div class="a" style="left:508px;top:1040px;width:58px;height:9px;border:1px solid #dcebf8;border-bottom:none;border-radius:3px 3px 0 0;background:linear-gradient(#c2daf0,#a4c6e6)"></div>
<div class="a" style="left:11px;top:1041px;width:30px;height:30px;border-radius:50%;background:radial-gradient(#e8f2fb,#9fc3e4);border:1px solid #dfeefa"></div>
<div class="a" style="left:72px;top:1042px;width:12px;height:12px;border-radius:50%;background:#e8e020"></div><div class="a" style="left:84px;top:1043px;width:10px;height:10px;border-radius:50%;background:#7fc0f0"></div>
<div class="a" style="left:155px;top:1043px;width:20px;height:20px;border-radius:50%;border:3px solid #eef6ff"></div>
<div class="a" style="left:222px;top:1044px;width:20px;height:20px;border-radius:50%;background:#30c8f0"></div>
<div class="a" style="left:283px;top:1043px;width:12px;height:12px;border-radius:50%;background:#e020d0"></div>
<div class="a" style="left:335px;top:1044px;width:24px;height:20px;border-radius:50%;background:#fff"></div>
<div class="a" style="left:396px;top:1044px;width:22px;height:6px;background:#d8b060"></div>
<div class="a" style="left:524px;top:1043px;width:28px;height:6px;background:#f4f4f4;border:1px solid #999"></div>
<div class="a" style="left:1912px;top:962px;width:4px;height:50px;background:#4a5a6a;border-radius:2px"></div>
<div class="a" style="left:1908px;top:1004px;width:12px;height:12px;border-radius:50%;background:#3aa4e0;border:1.500px solid #3a4a5a"></div>
<div class="a" style="left:1636px;top:1001px;width:103px;height:35px;border-radius:17px;background:#f6f6f6;border:1px solid #d0d0d0;box-shadow:0 1px 2px rgba(0,0,0,.25)"></div>
<div class="t " style="left:1667px;top:1005.8px;font-size:8.5px;color:#222;font-weight:bold">&nbsp;&nbsp;&nbsp;&nbsp; 1.8K/s</div>
<div class="t " style="left:1667px;top:1021.8px;font-size:8.5px;color:#222;font-weight:bold">&nbsp;&nbsp;&nbsp;&nbsp; 0.5K/s</div>
<svg style="left:1665px;top:1005px" width="8" height="28"><path d="M4 0.500l3 3.500h-2v4h-2v-4h-2z" fill="#e02020"/><path d="M4 25.500l3-3.500h-2v-4h-2v4h-2z" fill="#209040"/></svg>
<svg style="left:1716px;top:1004px" width="24" height="24"><path d="M2 18L14 10l-2 6 4-1-6 7z" fill="#2a6ae0"/><circle cx="16" cy="7" r="3.500" fill="#e82030"/></svg>
<div class="a" style="left:1615px;top:993px;width:46px;height:46px;border-radius:50%;background:radial-gradient(circle at 50% 25%,#7fd08a 0,#1f8a3c 45%,#0d6a2a 100%);border:1.500px solid #f0d8e4;box-shadow:0 0 2px rgba(0,0,0,.4)"></div>
<div class="a" style="left:1617px;top:1018px;width:42px;height:19px;border-radius:0 0 21px 21px;background:rgba(120,220,120,.55)"></div>
<div class="t " style="left:1438px;width:400px;text-align:center;top:1003.5px;font-size:11px;color:#fff;font-weight:bold">41%</div>
<div class="t " style="left:1617px;top:1011.5px;font-size:18px;color:#fff;font-weight:500;letter-spacing:1.6px;opacity:.92;text-shadow:0 0 2px rgba(0,0,0,.25)">外汇EA之家</div>
<div class="t " style="left:1706px;top:981.2px;font-size:31.5px;color:#41b6e8;font-weight:700;letter-spacing:-0.5px">外汇</div>
<div class="t " style="left:1800px;top:981.2px;font-size:31.5px;color:#41b6e8;font-weight:700;letter-spacing:-0.5px">之家</div>
<div class="a" style="left:1771px;top:982px;width:27px;height:27px;border-radius:50%;background:#ea5a72"></div>
<div class="t " style="left:1584.5px;width:400px;text-align:center;top:988.5px;font-size:14px;color:#fff;font-weight:bold;letter-spacing:-0.5px">EA</div>
<div class="t " style="left:1709px;top:1014.2px;font-size:17.5px;color:#39b2e6;letter-spacing:1.05px">www.eazhijia.com</div>
<div class="a" style="left:1809px;top:1022px;width:111px;height:26px;background:#f8831c;"></div>
<svg style="left:1812px;top:1024px" width="108" height="25" viewBox="0 0 90.720 21"><rect x="0" y="0" width="21" height="21" rx="5" fill="#f5440f"/><path d="M10.500 6.200V3.200" stroke="#fff" stroke-width="1.300"/><circle cx="10.500" cy="2.900" r="1.250" fill="#fff"/><ellipse cx="10.500" cy="12.300" rx="8.600" ry="6.800" fill="#fff"/><path d="M8.500 18.500h4l-2 2.200z" fill="#fff"/><rect x="4.400" y="9.400" width="12.200" height="6" rx="3" fill="#f5440f"/><circle cx="8" cy="12.400" r="1.150" fill="#fff"/><circle cx="13" cy="12.400" r="1.150" fill="#fff"/><text x="24.500" y="17.600" font-family="Liberation Sans,sans-serif" font-size="19" fill="#160800" stroke="#160800" stroke-width="0.700" textLength="64" lengthAdjust="spacingAndGlyphs" style="filter:blur(0.3px)">EAMOL</text></svg>

</body></html>
